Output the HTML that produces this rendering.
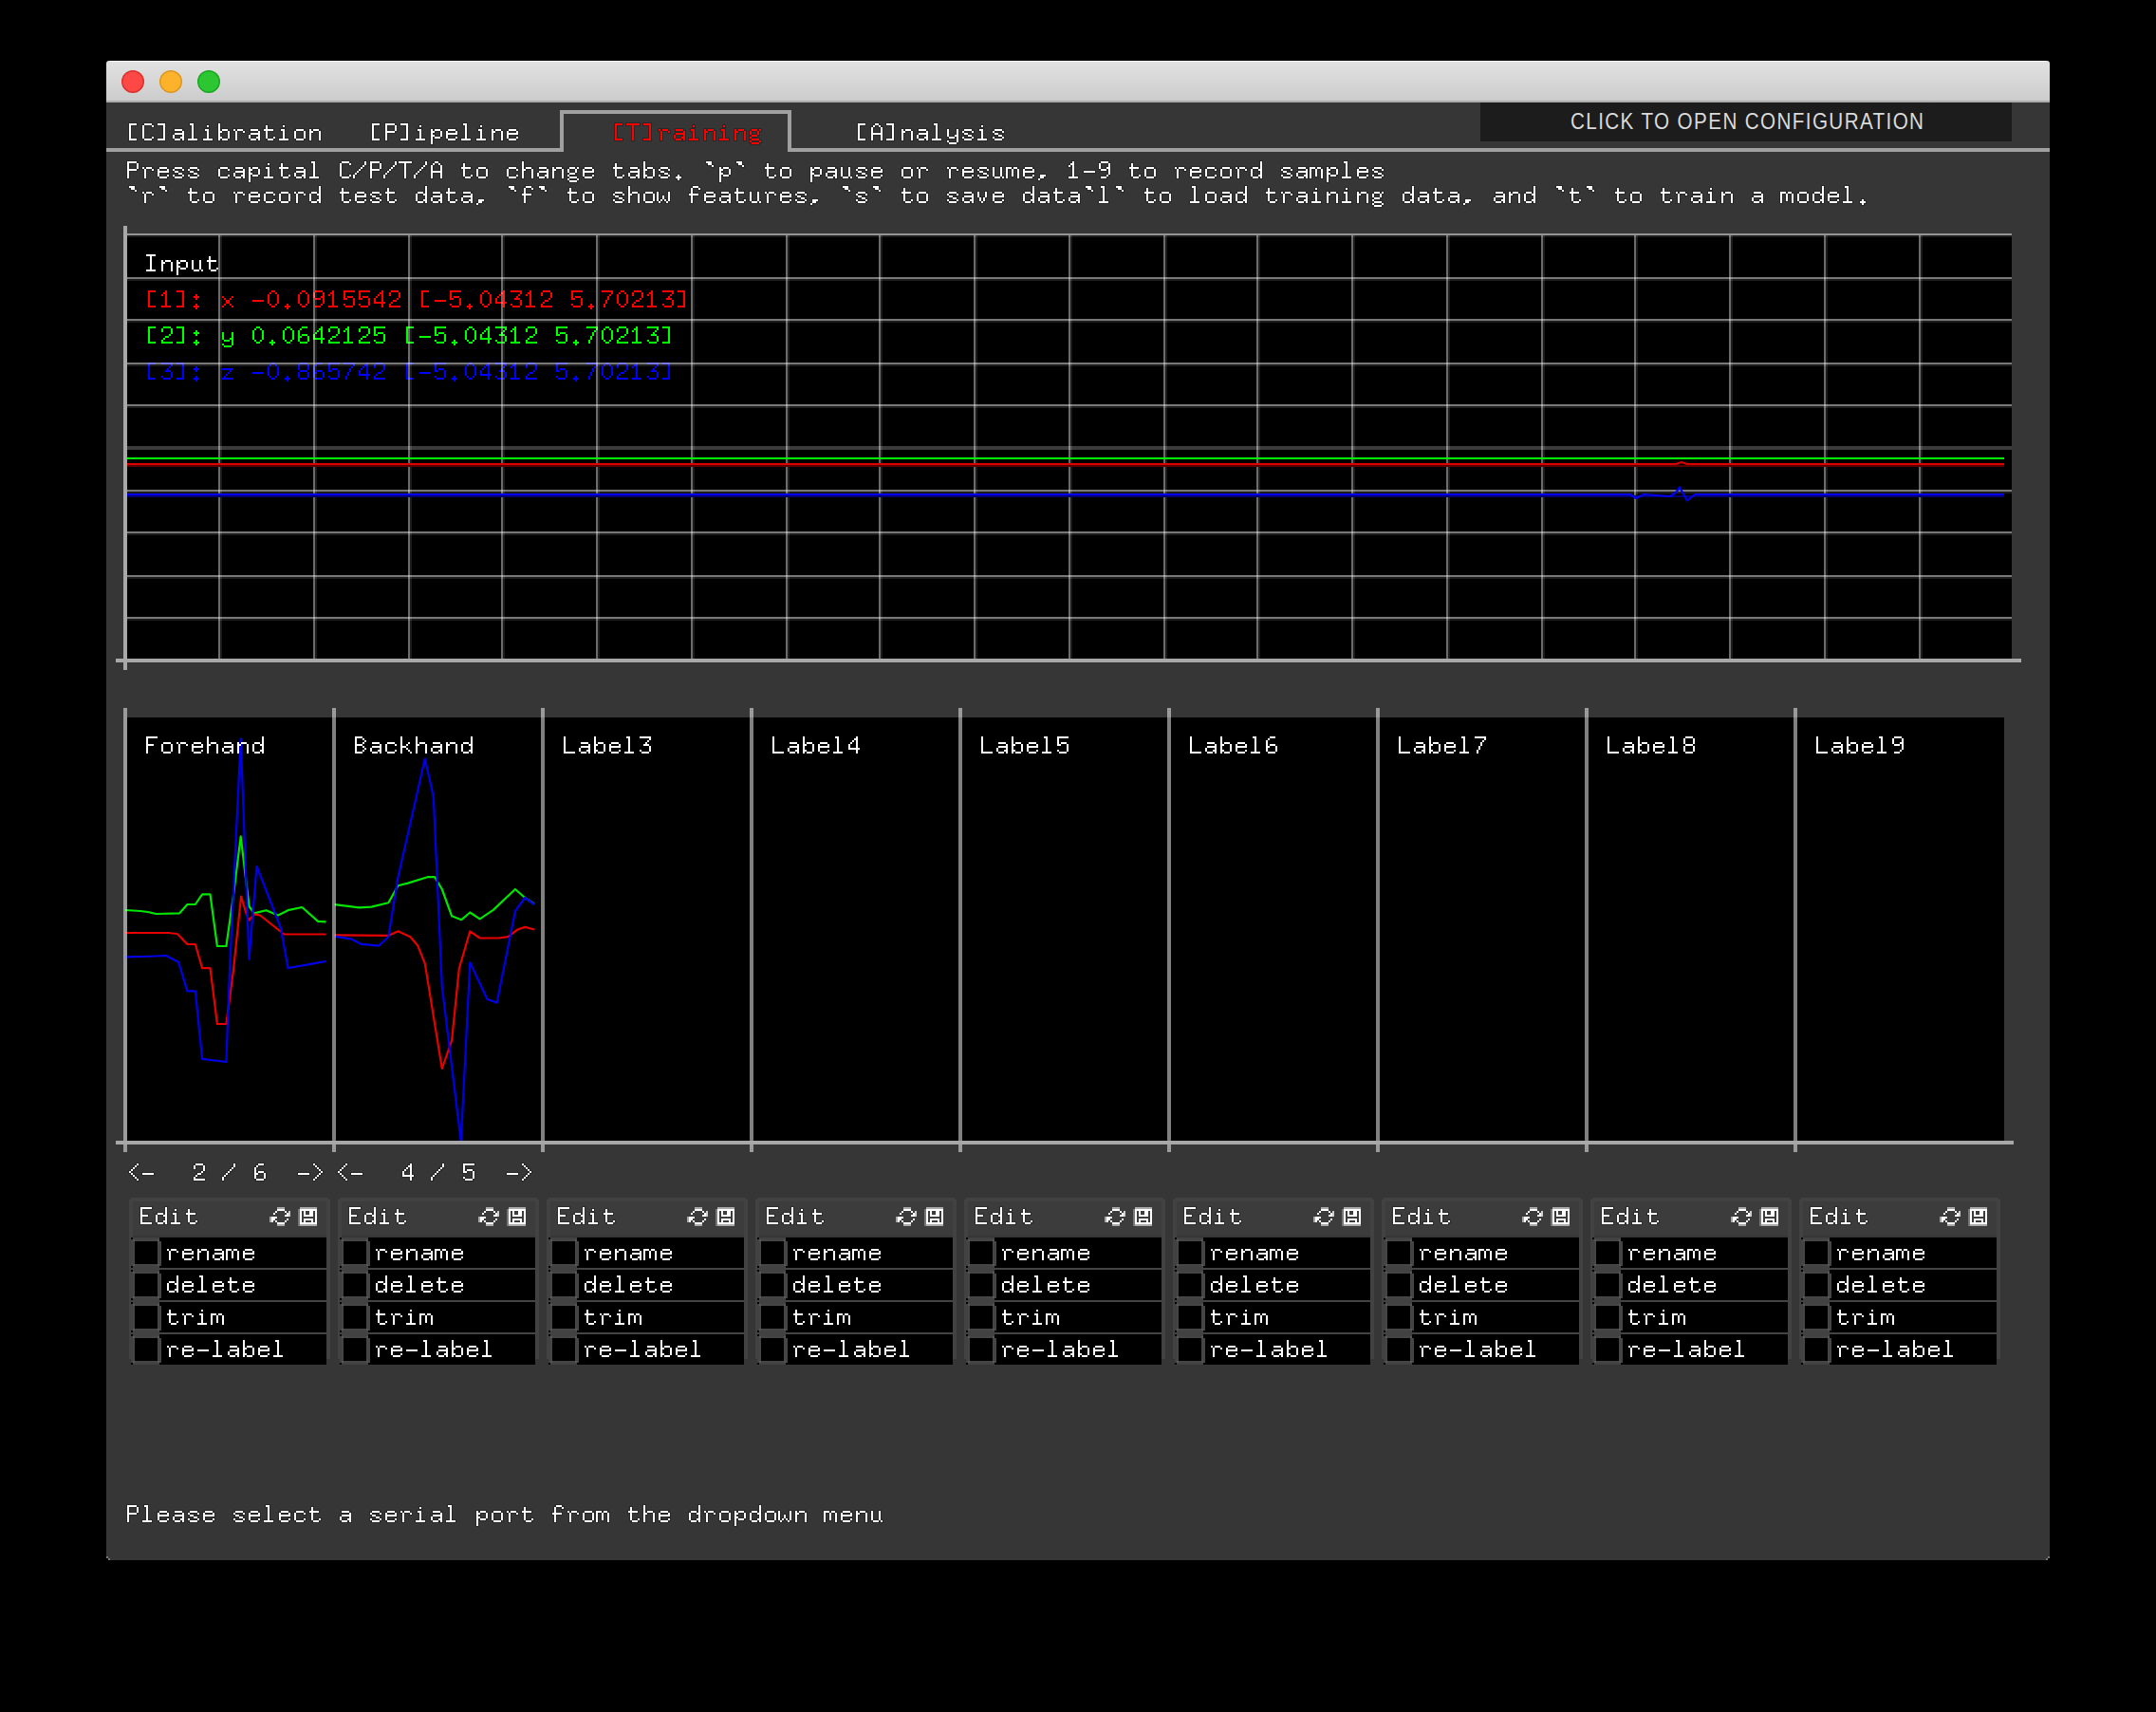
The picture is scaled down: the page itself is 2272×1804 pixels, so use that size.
<!DOCTYPE html><html><head><meta charset="utf-8"><style>html,body{margin:0;padding:0;background:#000;width:2272px;height:1804px;overflow:hidden}svg{display:block}</style></head><body>
<svg width="2272" height="1804" viewBox="0 0 2272 1804" shape-rendering="crispEdges">
<defs><linearGradient id="tb" x1="0" y1="0" x2="0" y2="1"><stop offset="0" stop-color="#e2e2e2"/><stop offset="1" stop-color="#cbcbcb"/></linearGradient>
<path id="g44" d="M4,18h6v2h-6zM4,20h4v2h-4zM2,22h2v2h-2z"/>
<path id="g45" d="M2,14h12v2h-12z"/>
<path id="g46" d="M6,18h2v2h-2zM4,20h6v2h-6zM6,22h2v2h-2z"/>
<path id="g47" d="M12,4h2v2h-2zM12,6h2v2h-2zM10,8h2v2h-2zM8,10h2v2h-2zM6,12h2v2h-2zM4,14h2v2h-2zM2,16h2v2h-2zM0,18h2v2h-2zM0,20h2v2h-2z"/>
<path id="g48" d="M6,4h4v2h-4zM4,6h2v2h-2zM10,6h2v2h-2zM2,8h2v2h-2zM12,8h2v2h-2zM2,10h2v2h-2zM12,10h2v2h-2zM2,12h2v2h-2zM12,12h2v2h-2zM2,14h2v2h-2zM12,14h2v2h-2zM2,16h2v2h-2zM12,16h2v2h-2zM4,18h2v2h-2zM10,18h2v2h-2zM6,20h4v2h-4z"/>
<path id="g49" d="M6,4h2v2h-2zM4,6h4v2h-4zM2,8h2v2h-2zM6,8h2v2h-2zM6,10h2v2h-2zM6,12h2v2h-2zM6,14h2v2h-2zM6,16h2v2h-2zM6,18h2v2h-2zM2,20h10v2h-10z"/>
<path id="g50" d="M4,4h8v2h-8zM2,6h2v2h-2zM12,6h2v2h-2zM2,8h2v2h-2zM12,8h2v2h-2zM12,10h2v2h-2zM10,12h2v2h-2zM6,14h4v2h-4zM4,16h2v2h-2zM2,18h2v2h-2zM2,20h12v2h-12z"/>
<path id="g51" d="M2,4h12v2h-12zM12,6h2v2h-2zM10,8h2v2h-2zM8,10h2v2h-2zM6,12h6v2h-6zM12,14h2v2h-2zM12,16h2v2h-2zM2,18h2v2h-2zM12,18h2v2h-2zM4,20h8v2h-8z"/>
<path id="g52" d="M10,4h2v2h-2zM8,6h4v2h-4zM6,8h2v2h-2zM10,8h2v2h-2zM4,10h2v2h-2zM10,10h2v2h-2zM2,12h2v2h-2zM10,12h2v2h-2zM2,14h2v2h-2zM10,14h2v2h-2zM2,16h12v2h-12zM10,18h2v2h-2zM10,20h2v2h-2z"/>
<path id="g53" d="M2,4h12v2h-12zM2,6h2v2h-2zM2,8h2v2h-2zM2,10h2v2h-2zM6,10h6v2h-6zM2,12h4v2h-4zM12,12h2v2h-2zM12,14h2v2h-2zM12,16h2v2h-2zM2,18h2v2h-2zM12,18h2v2h-2zM4,20h8v2h-8z"/>
<path id="g54" d="M6,4h6v2h-6zM4,6h2v2h-2zM2,8h2v2h-2zM2,10h2v2h-2zM2,12h2v2h-2zM6,12h6v2h-6zM2,14h4v2h-4zM12,14h2v2h-2zM2,16h2v2h-2zM12,16h2v2h-2zM2,18h2v2h-2zM12,18h2v2h-2zM4,20h8v2h-8z"/>
<path id="g55" d="M2,4h12v2h-12zM12,6h2v2h-2zM10,8h2v2h-2zM8,10h2v2h-2zM8,12h2v2h-2zM6,14h2v2h-2zM6,16h2v2h-2zM4,18h2v2h-2zM4,20h2v2h-2z"/>
<path id="g56" d="M4,4h8v2h-8zM2,6h2v2h-2zM12,6h2v2h-2zM2,8h2v2h-2zM12,8h2v2h-2zM2,10h2v2h-2zM12,10h2v2h-2zM4,12h8v2h-8zM2,14h2v2h-2zM12,14h2v2h-2zM2,16h2v2h-2zM12,16h2v2h-2zM2,18h2v2h-2zM12,18h2v2h-2zM4,20h8v2h-8z"/>
<path id="g57" d="M4,4h8v2h-8zM2,6h2v2h-2zM12,6h2v2h-2zM2,8h2v2h-2zM12,8h2v2h-2zM2,10h2v2h-2zM10,10h4v2h-4zM4,12h6v2h-6zM12,12h2v2h-2zM12,14h2v2h-2zM12,16h2v2h-2zM10,18h2v2h-2zM4,20h6v2h-6z"/>
<path id="g58" d="M6,8h2v2h-2zM4,10h6v2h-6zM6,12h2v2h-2zM6,18h2v2h-2zM4,20h6v2h-6zM6,22h2v2h-2z"/>
<path id="g60" d="M12,4h2v2h-2zM10,6h2v2h-2zM8,8h2v2h-2zM6,10h2v2h-2zM4,12h2v2h-2zM6,14h2v2h-2zM8,16h2v2h-2zM10,18h2v2h-2zM12,20h2v2h-2z"/>
<path id="g62" d="M2,4h2v2h-2zM4,6h2v2h-2zM6,8h2v2h-2zM8,10h2v2h-2zM10,12h2v2h-2zM8,14h2v2h-2zM6,16h2v2h-2zM4,18h2v2h-2zM2,20h2v2h-2z"/>
<path id="g65" d="M6,4h4v2h-4zM4,6h2v2h-2zM10,6h2v2h-2zM2,8h2v2h-2zM12,8h2v2h-2zM2,10h2v2h-2zM12,10h2v2h-2zM2,12h2v2h-2zM12,12h2v2h-2zM2,14h12v2h-12zM2,16h2v2h-2zM12,16h2v2h-2zM2,18h2v2h-2zM12,18h2v2h-2zM2,20h2v2h-2zM12,20h2v2h-2z"/>
<path id="g66" d="M2,4h8v2h-8zM2,6h2v2h-2zM10,6h2v2h-2zM2,8h2v2h-2zM12,8h2v2h-2zM2,10h2v2h-2zM10,10h2v2h-2zM2,12h8v2h-8zM2,14h2v2h-2zM10,14h2v2h-2zM2,16h2v2h-2zM12,16h2v2h-2zM2,18h2v2h-2zM10,18h2v2h-2zM2,20h8v2h-8z"/>
<path id="g67" d="M4,4h8v2h-8zM2,6h2v2h-2zM12,6h2v2h-2zM2,8h2v2h-2zM2,10h2v2h-2zM2,12h2v2h-2zM2,14h2v2h-2zM2,16h2v2h-2zM2,18h2v2h-2zM12,18h2v2h-2zM4,20h8v2h-8z"/>
<path id="g69" d="M2,4h12v2h-12zM2,6h2v2h-2zM2,8h2v2h-2zM2,10h2v2h-2zM2,12h8v2h-8zM2,14h2v2h-2zM2,16h2v2h-2zM2,18h2v2h-2zM2,20h12v2h-12z"/>
<path id="g70" d="M2,4h12v2h-12zM2,6h2v2h-2zM2,8h2v2h-2zM2,10h2v2h-2zM2,12h8v2h-8zM2,14h2v2h-2zM2,16h2v2h-2zM2,18h2v2h-2zM2,20h2v2h-2z"/>
<path id="g73" d="M2,4h10v2h-10zM6,6h2v2h-2zM6,8h2v2h-2zM6,10h2v2h-2zM6,12h2v2h-2zM6,14h2v2h-2zM6,16h2v2h-2zM6,18h2v2h-2zM2,20h10v2h-10z"/>
<path id="g76" d="M2,4h2v2h-2zM2,6h2v2h-2zM2,8h2v2h-2zM2,10h2v2h-2zM2,12h2v2h-2zM2,14h2v2h-2zM2,16h2v2h-2zM2,18h2v2h-2zM2,20h12v2h-12z"/>
<path id="g80" d="M2,4h10v2h-10zM2,6h2v2h-2zM12,6h2v2h-2zM2,8h2v2h-2zM12,8h2v2h-2zM2,10h2v2h-2zM12,10h2v2h-2zM2,12h10v2h-10zM2,14h2v2h-2zM2,16h2v2h-2zM2,18h2v2h-2zM2,20h2v2h-2z"/>
<path id="g84" d="M0,4h14v2h-14zM6,6h2v2h-2zM6,8h2v2h-2zM6,10h2v2h-2zM6,12h2v2h-2zM6,14h2v2h-2zM6,16h2v2h-2zM6,18h2v2h-2zM6,20h2v2h-2z"/>
<path id="g91" d="M4,4h8v2h-8zM4,6h2v2h-2zM4,8h2v2h-2zM4,10h2v2h-2zM4,12h2v2h-2zM4,14h2v2h-2zM4,16h2v2h-2zM4,18h2v2h-2zM4,20h8v2h-8z"/>
<path id="g93" d="M2,4h8v2h-8zM8,6h2v2h-2zM8,8h2v2h-2zM8,10h2v2h-2zM8,12h2v2h-2zM8,14h2v2h-2zM8,16h2v2h-2zM8,18h2v2h-2zM2,20h8v2h-8z"/>
<path id="g96" d="M4,4h6v2h-6zM6,6h4v2h-4zM10,8h2v2h-2z"/>
<path id="g97" d="M4,10h8v2h-8zM12,12h2v2h-2zM4,14h10v2h-10zM2,16h2v2h-2zM12,16h2v2h-2zM2,18h2v2h-2zM10,18h4v2h-4zM4,20h6v2h-6zM12,20h2v2h-2z"/>
<path id="g98" d="M2,4h2v2h-2zM2,6h2v2h-2zM2,8h2v2h-2zM2,10h2v2h-2zM6,10h6v2h-6zM2,12h4v2h-4zM12,12h2v2h-2zM2,14h2v2h-2zM12,14h2v2h-2zM2,16h2v2h-2zM12,16h2v2h-2zM2,18h4v2h-4zM12,18h2v2h-2zM2,20h2v2h-2zM6,20h6v2h-6z"/>
<path id="g99" d="M4,10h8v2h-8zM2,12h2v2h-2zM12,12h2v2h-2zM2,14h2v2h-2zM2,16h2v2h-2zM2,18h2v2h-2zM12,18h2v2h-2zM4,20h8v2h-8z"/>
<path id="g100" d="M12,4h2v2h-2zM12,6h2v2h-2zM12,8h2v2h-2zM4,10h6v2h-6zM12,10h2v2h-2zM2,12h2v2h-2zM10,12h4v2h-4zM2,14h2v2h-2zM12,14h2v2h-2zM2,16h2v2h-2zM12,16h2v2h-2zM2,18h2v2h-2zM10,18h4v2h-4zM4,20h6v2h-6zM12,20h2v2h-2z"/>
<path id="g101" d="M4,10h8v2h-8zM2,12h2v2h-2zM12,12h2v2h-2zM2,14h12v2h-12zM2,16h2v2h-2zM2,18h2v2h-2zM12,18h2v2h-2zM4,20h8v2h-8z"/>
<path id="g102" d="M6,4h6v2h-6zM4,6h2v2h-2zM12,6h2v2h-2zM4,8h2v2h-2zM4,10h2v2h-2zM2,12h10v2h-10zM4,14h2v2h-2zM4,16h2v2h-2zM4,18h2v2h-2zM4,20h2v2h-2z"/>
<path id="g103" d="M4,10h6v2h-6zM12,10h2v2h-2zM2,12h2v2h-2zM10,12h2v2h-2zM2,14h2v2h-2zM10,14h2v2h-2zM4,16h6v2h-6zM2,18h2v2h-2zM4,20h8v2h-8zM2,22h2v2h-2zM12,22h2v2h-2zM4,24h8v2h-8z"/>
<path id="g104" d="M2,4h2v2h-2zM2,6h2v2h-2zM2,8h2v2h-2zM2,10h2v2h-2zM6,10h6v2h-6zM2,12h4v2h-4zM12,12h2v2h-2zM2,14h2v2h-2zM12,14h2v2h-2zM2,16h2v2h-2zM12,16h2v2h-2zM2,18h2v2h-2zM12,18h2v2h-2zM2,20h2v2h-2zM12,20h2v2h-2z"/>
<path id="g105" d="M6,6h2v2h-2zM4,10h4v2h-4zM6,12h2v2h-2zM6,14h2v2h-2zM6,16h2v2h-2zM6,18h2v2h-2zM2,20h10v2h-10z"/>
<path id="g107" d="M2,4h2v2h-2zM2,6h2v2h-2zM2,8h2v2h-2zM2,10h2v2h-2zM10,10h2v2h-2zM2,12h2v2h-2zM8,12h2v2h-2zM2,14h6v2h-6zM2,16h2v2h-2zM8,16h2v2h-2zM2,18h2v2h-2zM10,18h2v2h-2zM2,20h2v2h-2zM12,20h2v2h-2z"/>
<path id="g108" d="M4,4h4v2h-4zM6,6h2v2h-2zM6,8h2v2h-2zM6,10h2v2h-2zM6,12h2v2h-2zM6,14h2v2h-2zM6,16h2v2h-2zM6,18h2v2h-2zM2,20h10v2h-10z"/>
<path id="g109" d="M0,10h6v2h-6zM8,10h4v2h-4zM0,12h2v2h-2zM6,12h2v2h-2zM12,12h2v2h-2zM0,14h2v2h-2zM6,14h2v2h-2zM12,14h2v2h-2zM0,16h2v2h-2zM6,16h2v2h-2zM12,16h2v2h-2zM0,18h2v2h-2zM6,18h2v2h-2zM12,18h2v2h-2zM0,20h2v2h-2zM12,20h2v2h-2z"/>
<path id="g110" d="M2,10h2v2h-2zM6,10h6v2h-6zM2,12h4v2h-4zM12,12h2v2h-2zM2,14h2v2h-2zM12,14h2v2h-2zM2,16h2v2h-2zM12,16h2v2h-2zM2,18h2v2h-2zM12,18h2v2h-2zM2,20h2v2h-2zM12,20h2v2h-2z"/>
<path id="g111" d="M4,10h8v2h-8zM2,12h2v2h-2zM12,12h2v2h-2zM2,14h2v2h-2zM12,14h2v2h-2zM2,16h2v2h-2zM12,16h2v2h-2zM2,18h2v2h-2zM12,18h2v2h-2zM4,20h8v2h-8z"/>
<path id="g112" d="M2,10h2v2h-2zM6,10h6v2h-6zM2,12h4v2h-4zM12,12h2v2h-2zM2,14h2v2h-2zM12,14h2v2h-2zM2,16h4v2h-4zM12,16h2v2h-2zM2,18h2v2h-2zM6,18h6v2h-6zM2,20h2v2h-2zM2,22h2v2h-2zM2,24h2v2h-2z"/>
<path id="g114" d="M2,10h2v2h-2zM6,10h6v2h-6zM4,12h2v2h-2zM12,12h2v2h-2zM4,14h2v2h-2zM4,16h2v2h-2zM4,18h2v2h-2zM4,20h2v2h-2z"/>
<path id="g115" d="M4,10h8v2h-8zM2,12h2v2h-2zM12,12h2v2h-2zM4,14h4v2h-4zM8,16h4v2h-4zM2,18h2v2h-2zM12,18h2v2h-2zM4,20h8v2h-8z"/>
<path id="g116" d="M4,6h2v2h-2zM4,8h2v2h-2zM2,10h10v2h-10zM4,12h2v2h-2zM4,14h2v2h-2zM4,16h2v2h-2zM4,18h2v2h-2zM12,18h2v2h-2zM6,20h6v2h-6z"/>
<path id="g117" d="M2,10h2v2h-2zM10,10h2v2h-2zM2,12h2v2h-2zM10,12h2v2h-2zM2,14h2v2h-2zM10,14h2v2h-2zM2,16h2v2h-2zM10,16h2v2h-2zM2,18h2v2h-2zM10,18h2v2h-2zM4,20h6v2h-6zM12,20h2v2h-2z"/>
<path id="g118" d="M2,10h2v2h-2zM10,10h2v2h-2zM2,12h2v2h-2zM10,12h2v2h-2zM2,14h2v2h-2zM10,14h2v2h-2zM4,16h2v2h-2zM8,16h2v2h-2zM4,18h2v2h-2zM8,18h2v2h-2zM6,20h2v2h-2z"/>
<path id="g119" d="M0,10h2v2h-2zM12,10h2v2h-2zM0,12h2v2h-2zM12,12h2v2h-2zM0,14h2v2h-2zM6,14h2v2h-2zM12,14h2v2h-2zM0,16h2v2h-2zM6,16h2v2h-2zM12,16h2v2h-2zM0,18h2v2h-2zM4,18h2v2h-2zM8,18h2v2h-2zM12,18h2v2h-2zM2,20h2v2h-2zM10,20h2v2h-2z"/>
<path id="g120" d="M2,10h2v2h-2zM12,10h2v2h-2zM4,12h2v2h-2zM10,12h2v2h-2zM6,14h4v2h-4zM6,16h4v2h-4zM4,18h2v2h-2zM10,18h2v2h-2zM2,20h2v2h-2zM12,20h2v2h-2z"/>
<path id="g121" d="M2,10h2v2h-2zM12,10h2v2h-2zM2,12h2v2h-2zM12,12h2v2h-2zM2,14h2v2h-2zM12,14h2v2h-2zM2,16h2v2h-2zM10,16h4v2h-4zM4,18h6v2h-6zM12,18h2v2h-2zM12,20h2v2h-2zM2,22h2v2h-2zM12,22h2v2h-2zM4,24h8v2h-8z"/>
<path id="g122" d="M2,10h12v2h-12zM10,12h2v2h-2zM8,14h2v2h-2zM6,16h2v2h-2zM4,18h2v2h-2zM2,20h12v2h-12z"/>
</defs>
<rect x="0" y="0" width="2272" height="1804" fill="#000"/>
<rect x="112" y="84" width="2048" height="1560" fill="#363636"/>
<path d="M112,108 V67 Q112,64 115,64 H2157 Q2160,64 2160,67 V108 Z" fill="url(#tb)" shape-rendering="auto"/>
<rect x="116" y="64" width="2040" height="1" fill="#f6f6f6"/>
<rect x="112" y="106" width="2048" height="2" fill="#acacac"/>
<circle cx="140" cy="86" r="11.3" fill="#fd4845" stroke="#dc2e2a" stroke-width="1.4" shape-rendering="auto"/>
<circle cx="180" cy="86" r="11.3" fill="#fdb22b" stroke="#dc961c" stroke-width="1.4" shape-rendering="auto"/>
<circle cx="220" cy="86" r="11.3" fill="#2cc632" stroke="#17a61e" stroke-width="1.4" shape-rendering="auto"/>
<rect x="112" y="1642" width="2" height="2" fill="#000"/><rect x="2158" y="1642" width="2" height="2" fill="#000"/>
<g fill="#777"><rect x="112" y="1640" width="2" height="2"/><rect x="114" y="1642" width="2" height="2"/><rect x="2158" y="1640" width="2" height="2"/><rect x="2156" y="1642" width="2" height="2"/></g>
<path d="M112,158 H592 V118 H832 V158 H2160" fill="none" stroke="#a0a0a0" stroke-width="4"/>
<rect x="1560" y="108" width="560" height="41" fill="#1c1c1c"/>
<text x="0" y="0" transform="translate(1655,136.4) scale(0.84,1)" fill="#dadada" style='font-family:"Liberation Sans",sans-serif;font-size:24.6px' textLength="442.9" lengthAdjust="spacing">CLICK TO OPEN CONFIGURATION</text>
<g fill="none" stroke="#000" stroke-opacity="0.25" stroke-width="2"><use href="#g91" x="132" y="126"/><use href="#g67" x="148" y="126"/><use href="#g93" x="164" y="126"/><use href="#g97" x="180" y="126"/><use href="#g108" x="196" y="126"/><use href="#g105" x="212" y="126"/><use href="#g98" x="228" y="126"/><use href="#g114" x="244" y="126"/><use href="#g97" x="260" y="126"/><use href="#g116" x="276" y="126"/><use href="#g105" x="292" y="126"/><use href="#g111" x="308" y="126"/><use href="#g110" x="324" y="126"/></g>
<g fill="#fff"><use href="#g91" x="132" y="126"/><use href="#g67" x="148" y="126"/><use href="#g93" x="164" y="126"/><use href="#g97" x="180" y="126"/><use href="#g108" x="196" y="126"/><use href="#g105" x="212" y="126"/><use href="#g98" x="228" y="126"/><use href="#g114" x="244" y="126"/><use href="#g97" x="260" y="126"/><use href="#g116" x="276" y="126"/><use href="#g105" x="292" y="126"/><use href="#g111" x="308" y="126"/><use href="#g110" x="324" y="126"/></g>
<g fill="none" stroke="#000" stroke-opacity="0.25" stroke-width="2"><use href="#g91" x="388" y="126"/><use href="#g80" x="404" y="126"/><use href="#g93" x="420" y="126"/><use href="#g105" x="436" y="126"/><use href="#g112" x="452" y="126"/><use href="#g101" x="468" y="126"/><use href="#g108" x="484" y="126"/><use href="#g105" x="500" y="126"/><use href="#g110" x="516" y="126"/><use href="#g101" x="532" y="126"/></g>
<g fill="#fff"><use href="#g91" x="388" y="126"/><use href="#g80" x="404" y="126"/><use href="#g93" x="420" y="126"/><use href="#g105" x="436" y="126"/><use href="#g112" x="452" y="126"/><use href="#g101" x="468" y="126"/><use href="#g108" x="484" y="126"/><use href="#g105" x="500" y="126"/><use href="#g110" x="516" y="126"/><use href="#g101" x="532" y="126"/></g>
<g fill="none" stroke="#000" stroke-opacity="0.25" stroke-width="2"><use href="#g91" x="644" y="126"/><use href="#g84" x="660" y="126"/><use href="#g93" x="676" y="126"/><use href="#g114" x="692" y="126"/><use href="#g97" x="708" y="126"/><use href="#g105" x="724" y="126"/><use href="#g110" x="740" y="126"/><use href="#g105" x="756" y="126"/><use href="#g110" x="772" y="126"/><use href="#g103" x="788" y="126"/></g>
<g fill="#ff0000"><use href="#g91" x="644" y="126"/><use href="#g84" x="660" y="126"/><use href="#g93" x="676" y="126"/><use href="#g114" x="692" y="126"/><use href="#g97" x="708" y="126"/><use href="#g105" x="724" y="126"/><use href="#g110" x="740" y="126"/><use href="#g105" x="756" y="126"/><use href="#g110" x="772" y="126"/><use href="#g103" x="788" y="126"/></g>
<g fill="none" stroke="#000" stroke-opacity="0.25" stroke-width="2"><use href="#g91" x="900" y="126"/><use href="#g65" x="916" y="126"/><use href="#g93" x="932" y="126"/><use href="#g110" x="948" y="126"/><use href="#g97" x="964" y="126"/><use href="#g108" x="980" y="126"/><use href="#g121" x="996" y="126"/><use href="#g115" x="1012" y="126"/><use href="#g105" x="1028" y="126"/><use href="#g115" x="1044" y="126"/></g>
<g fill="#fff"><use href="#g91" x="900" y="126"/><use href="#g65" x="916" y="126"/><use href="#g93" x="932" y="126"/><use href="#g110" x="948" y="126"/><use href="#g97" x="964" y="126"/><use href="#g108" x="980" y="126"/><use href="#g121" x="996" y="126"/><use href="#g115" x="1012" y="126"/><use href="#g105" x="1028" y="126"/><use href="#g115" x="1044" y="126"/></g>
<g fill="none" stroke="#000" stroke-opacity="0.25" stroke-width="2"><use href="#g80" x="132" y="166"/><use href="#g114" x="148" y="166"/><use href="#g101" x="164" y="166"/><use href="#g115" x="180" y="166"/><use href="#g115" x="196" y="166"/><use href="#g99" x="228" y="166"/><use href="#g97" x="244" y="166"/><use href="#g112" x="260" y="166"/><use href="#g105" x="276" y="166"/><use href="#g116" x="292" y="166"/><use href="#g97" x="308" y="166"/><use href="#g108" x="324" y="166"/><use href="#g67" x="356" y="166"/><use href="#g47" x="372" y="166"/><use href="#g80" x="388" y="166"/><use href="#g47" x="404" y="166"/><use href="#g84" x="420" y="166"/><use href="#g47" x="436" y="166"/><use href="#g65" x="452" y="166"/><use href="#g116" x="484" y="166"/><use href="#g111" x="500" y="166"/><use href="#g99" x="532" y="166"/><use href="#g104" x="548" y="166"/><use href="#g97" x="564" y="166"/><use href="#g110" x="580" y="166"/><use href="#g103" x="596" y="166"/><use href="#g101" x="612" y="166"/><use href="#g116" x="644" y="166"/><use href="#g97" x="660" y="166"/><use href="#g98" x="676" y="166"/><use href="#g115" x="692" y="166"/><use href="#g46" x="708" y="166"/><use href="#g96" x="740" y="166"/><use href="#g112" x="756" y="166"/><use href="#g96" x="772" y="166"/><use href="#g116" x="804" y="166"/><use href="#g111" x="820" y="166"/><use href="#g112" x="852" y="166"/><use href="#g97" x="868" y="166"/><use href="#g117" x="884" y="166"/><use href="#g115" x="900" y="166"/><use href="#g101" x="916" y="166"/><use href="#g111" x="948" y="166"/><use href="#g114" x="964" y="166"/><use href="#g114" x="996" y="166"/><use href="#g101" x="1012" y="166"/><use href="#g115" x="1028" y="166"/><use href="#g117" x="1044" y="166"/><use href="#g109" x="1060" y="166"/><use href="#g101" x="1076" y="166"/><use href="#g44" x="1092" y="166"/><use href="#g49" x="1124" y="166"/><use href="#g45" x="1140" y="166"/><use href="#g57" x="1156" y="166"/><use href="#g116" x="1188" y="166"/><use href="#g111" x="1204" y="166"/><use href="#g114" x="1236" y="166"/><use href="#g101" x="1252" y="166"/><use href="#g99" x="1268" y="166"/><use href="#g111" x="1284" y="166"/><use href="#g114" x="1300" y="166"/><use href="#g100" x="1316" y="166"/><use href="#g115" x="1348" y="166"/><use href="#g97" x="1364" y="166"/><use href="#g109" x="1380" y="166"/><use href="#g112" x="1396" y="166"/><use href="#g108" x="1412" y="166"/><use href="#g101" x="1428" y="166"/><use href="#g115" x="1444" y="166"/></g>
<g fill="#fff"><use href="#g80" x="132" y="166"/><use href="#g114" x="148" y="166"/><use href="#g101" x="164" y="166"/><use href="#g115" x="180" y="166"/><use href="#g115" x="196" y="166"/><use href="#g99" x="228" y="166"/><use href="#g97" x="244" y="166"/><use href="#g112" x="260" y="166"/><use href="#g105" x="276" y="166"/><use href="#g116" x="292" y="166"/><use href="#g97" x="308" y="166"/><use href="#g108" x="324" y="166"/><use href="#g67" x="356" y="166"/><use href="#g47" x="372" y="166"/><use href="#g80" x="388" y="166"/><use href="#g47" x="404" y="166"/><use href="#g84" x="420" y="166"/><use href="#g47" x="436" y="166"/><use href="#g65" x="452" y="166"/><use href="#g116" x="484" y="166"/><use href="#g111" x="500" y="166"/><use href="#g99" x="532" y="166"/><use href="#g104" x="548" y="166"/><use href="#g97" x="564" y="166"/><use href="#g110" x="580" y="166"/><use href="#g103" x="596" y="166"/><use href="#g101" x="612" y="166"/><use href="#g116" x="644" y="166"/><use href="#g97" x="660" y="166"/><use href="#g98" x="676" y="166"/><use href="#g115" x="692" y="166"/><use href="#g46" x="708" y="166"/><use href="#g96" x="740" y="166"/><use href="#g112" x="756" y="166"/><use href="#g96" x="772" y="166"/><use href="#g116" x="804" y="166"/><use href="#g111" x="820" y="166"/><use href="#g112" x="852" y="166"/><use href="#g97" x="868" y="166"/><use href="#g117" x="884" y="166"/><use href="#g115" x="900" y="166"/><use href="#g101" x="916" y="166"/><use href="#g111" x="948" y="166"/><use href="#g114" x="964" y="166"/><use href="#g114" x="996" y="166"/><use href="#g101" x="1012" y="166"/><use href="#g115" x="1028" y="166"/><use href="#g117" x="1044" y="166"/><use href="#g109" x="1060" y="166"/><use href="#g101" x="1076" y="166"/><use href="#g44" x="1092" y="166"/><use href="#g49" x="1124" y="166"/><use href="#g45" x="1140" y="166"/><use href="#g57" x="1156" y="166"/><use href="#g116" x="1188" y="166"/><use href="#g111" x="1204" y="166"/><use href="#g114" x="1236" y="166"/><use href="#g101" x="1252" y="166"/><use href="#g99" x="1268" y="166"/><use href="#g111" x="1284" y="166"/><use href="#g114" x="1300" y="166"/><use href="#g100" x="1316" y="166"/><use href="#g115" x="1348" y="166"/><use href="#g97" x="1364" y="166"/><use href="#g109" x="1380" y="166"/><use href="#g112" x="1396" y="166"/><use href="#g108" x="1412" y="166"/><use href="#g101" x="1428" y="166"/><use href="#g115" x="1444" y="166"/></g>
<g fill="none" stroke="#000" stroke-opacity="0.25" stroke-width="2"><use href="#g96" x="132" y="192"/><use href="#g114" x="148" y="192"/><use href="#g96" x="164" y="192"/><use href="#g116" x="196" y="192"/><use href="#g111" x="212" y="192"/><use href="#g114" x="244" y="192"/><use href="#g101" x="260" y="192"/><use href="#g99" x="276" y="192"/><use href="#g111" x="292" y="192"/><use href="#g114" x="308" y="192"/><use href="#g100" x="324" y="192"/><use href="#g116" x="356" y="192"/><use href="#g101" x="372" y="192"/><use href="#g115" x="388" y="192"/><use href="#g116" x="404" y="192"/><use href="#g100" x="436" y="192"/><use href="#g97" x="452" y="192"/><use href="#g116" x="468" y="192"/><use href="#g97" x="484" y="192"/><use href="#g44" x="500" y="192"/><use href="#g96" x="532" y="192"/><use href="#g102" x="548" y="192"/><use href="#g96" x="564" y="192"/><use href="#g116" x="596" y="192"/><use href="#g111" x="612" y="192"/><use href="#g115" x="644" y="192"/><use href="#g104" x="660" y="192"/><use href="#g111" x="676" y="192"/><use href="#g119" x="692" y="192"/><use href="#g102" x="724" y="192"/><use href="#g101" x="740" y="192"/><use href="#g97" x="756" y="192"/><use href="#g116" x="772" y="192"/><use href="#g117" x="788" y="192"/><use href="#g114" x="804" y="192"/><use href="#g101" x="820" y="192"/><use href="#g115" x="836" y="192"/><use href="#g44" x="852" y="192"/><use href="#g96" x="884" y="192"/><use href="#g115" x="900" y="192"/><use href="#g96" x="916" y="192"/><use href="#g116" x="948" y="192"/><use href="#g111" x="964" y="192"/><use href="#g115" x="996" y="192"/><use href="#g97" x="1012" y="192"/><use href="#g118" x="1028" y="192"/><use href="#g101" x="1044" y="192"/><use href="#g100" x="1076" y="192"/><use href="#g97" x="1092" y="192"/><use href="#g116" x="1108" y="192"/><use href="#g97" x="1124" y="192"/><use href="#g96" x="1140" y="192"/><use href="#g108" x="1156" y="192"/><use href="#g96" x="1172" y="192"/><use href="#g116" x="1204" y="192"/><use href="#g111" x="1220" y="192"/><use href="#g108" x="1252" y="192"/><use href="#g111" x="1268" y="192"/><use href="#g97" x="1284" y="192"/><use href="#g100" x="1300" y="192"/><use href="#g116" x="1332" y="192"/><use href="#g114" x="1348" y="192"/><use href="#g97" x="1364" y="192"/><use href="#g105" x="1380" y="192"/><use href="#g110" x="1396" y="192"/><use href="#g105" x="1412" y="192"/><use href="#g110" x="1428" y="192"/><use href="#g103" x="1444" y="192"/><use href="#g100" x="1476" y="192"/><use href="#g97" x="1492" y="192"/><use href="#g116" x="1508" y="192"/><use href="#g97" x="1524" y="192"/><use href="#g44" x="1540" y="192"/><use href="#g97" x="1572" y="192"/><use href="#g110" x="1588" y="192"/><use href="#g100" x="1604" y="192"/><use href="#g96" x="1636" y="192"/><use href="#g116" x="1652" y="192"/><use href="#g96" x="1668" y="192"/><use href="#g116" x="1700" y="192"/><use href="#g111" x="1716" y="192"/><use href="#g116" x="1748" y="192"/><use href="#g114" x="1764" y="192"/><use href="#g97" x="1780" y="192"/><use href="#g105" x="1796" y="192"/><use href="#g110" x="1812" y="192"/><use href="#g97" x="1844" y="192"/><use href="#g109" x="1876" y="192"/><use href="#g111" x="1892" y="192"/><use href="#g100" x="1908" y="192"/><use href="#g101" x="1924" y="192"/><use href="#g108" x="1940" y="192"/><use href="#g46" x="1956" y="192"/></g>
<g fill="#fff"><use href="#g96" x="132" y="192"/><use href="#g114" x="148" y="192"/><use href="#g96" x="164" y="192"/><use href="#g116" x="196" y="192"/><use href="#g111" x="212" y="192"/><use href="#g114" x="244" y="192"/><use href="#g101" x="260" y="192"/><use href="#g99" x="276" y="192"/><use href="#g111" x="292" y="192"/><use href="#g114" x="308" y="192"/><use href="#g100" x="324" y="192"/><use href="#g116" x="356" y="192"/><use href="#g101" x="372" y="192"/><use href="#g115" x="388" y="192"/><use href="#g116" x="404" y="192"/><use href="#g100" x="436" y="192"/><use href="#g97" x="452" y="192"/><use href="#g116" x="468" y="192"/><use href="#g97" x="484" y="192"/><use href="#g44" x="500" y="192"/><use href="#g96" x="532" y="192"/><use href="#g102" x="548" y="192"/><use href="#g96" x="564" y="192"/><use href="#g116" x="596" y="192"/><use href="#g111" x="612" y="192"/><use href="#g115" x="644" y="192"/><use href="#g104" x="660" y="192"/><use href="#g111" x="676" y="192"/><use href="#g119" x="692" y="192"/><use href="#g102" x="724" y="192"/><use href="#g101" x="740" y="192"/><use href="#g97" x="756" y="192"/><use href="#g116" x="772" y="192"/><use href="#g117" x="788" y="192"/><use href="#g114" x="804" y="192"/><use href="#g101" x="820" y="192"/><use href="#g115" x="836" y="192"/><use href="#g44" x="852" y="192"/><use href="#g96" x="884" y="192"/><use href="#g115" x="900" y="192"/><use href="#g96" x="916" y="192"/><use href="#g116" x="948" y="192"/><use href="#g111" x="964" y="192"/><use href="#g115" x="996" y="192"/><use href="#g97" x="1012" y="192"/><use href="#g118" x="1028" y="192"/><use href="#g101" x="1044" y="192"/><use href="#g100" x="1076" y="192"/><use href="#g97" x="1092" y="192"/><use href="#g116" x="1108" y="192"/><use href="#g97" x="1124" y="192"/><use href="#g96" x="1140" y="192"/><use href="#g108" x="1156" y="192"/><use href="#g96" x="1172" y="192"/><use href="#g116" x="1204" y="192"/><use href="#g111" x="1220" y="192"/><use href="#g108" x="1252" y="192"/><use href="#g111" x="1268" y="192"/><use href="#g97" x="1284" y="192"/><use href="#g100" x="1300" y="192"/><use href="#g116" x="1332" y="192"/><use href="#g114" x="1348" y="192"/><use href="#g97" x="1364" y="192"/><use href="#g105" x="1380" y="192"/><use href="#g110" x="1396" y="192"/><use href="#g105" x="1412" y="192"/><use href="#g110" x="1428" y="192"/><use href="#g103" x="1444" y="192"/><use href="#g100" x="1476" y="192"/><use href="#g97" x="1492" y="192"/><use href="#g116" x="1508" y="192"/><use href="#g97" x="1524" y="192"/><use href="#g44" x="1540" y="192"/><use href="#g97" x="1572" y="192"/><use href="#g110" x="1588" y="192"/><use href="#g100" x="1604" y="192"/><use href="#g96" x="1636" y="192"/><use href="#g116" x="1652" y="192"/><use href="#g96" x="1668" y="192"/><use href="#g116" x="1700" y="192"/><use href="#g111" x="1716" y="192"/><use href="#g116" x="1748" y="192"/><use href="#g114" x="1764" y="192"/><use href="#g97" x="1780" y="192"/><use href="#g105" x="1796" y="192"/><use href="#g110" x="1812" y="192"/><use href="#g97" x="1844" y="192"/><use href="#g109" x="1876" y="192"/><use href="#g111" x="1892" y="192"/><use href="#g100" x="1908" y="192"/><use href="#g101" x="1924" y="192"/><use href="#g108" x="1940" y="192"/><use href="#g46" x="1956" y="192"/></g>
<rect x="134" y="248" width="1986" height="446" fill="#000"/>
<g fill="#fff"><use href="#g73" x="152" y="264"/><use href="#g110" x="168" y="264"/><use href="#g112" x="184" y="264"/><use href="#g117" x="200" y="264"/><use href="#g116" x="216" y="264"/></g>
<g fill="#ff0000"><use href="#g91" x="152" y="302"/><use href="#g49" x="168" y="302"/><use href="#g93" x="184" y="302"/><use href="#g58" x="200" y="302"/><use href="#g120" x="232" y="302"/><use href="#g45" x="264" y="302"/><use href="#g48" x="280" y="302"/><use href="#g46" x="296" y="302"/><use href="#g48" x="312" y="302"/><use href="#g57" x="328" y="302"/><use href="#g49" x="344" y="302"/><use href="#g53" x="360" y="302"/><use href="#g53" x="376" y="302"/><use href="#g52" x="392" y="302"/><use href="#g50" x="408" y="302"/><use href="#g91" x="440" y="302"/><use href="#g45" x="456" y="302"/><use href="#g53" x="472" y="302"/><use href="#g46" x="488" y="302"/><use href="#g48" x="504" y="302"/><use href="#g52" x="520" y="302"/><use href="#g51" x="536" y="302"/><use href="#g49" x="552" y="302"/><use href="#g50" x="568" y="302"/><use href="#g53" x="600" y="302"/><use href="#g46" x="616" y="302"/><use href="#g55" x="632" y="302"/><use href="#g48" x="648" y="302"/><use href="#g50" x="664" y="302"/><use href="#g49" x="680" y="302"/><use href="#g51" x="696" y="302"/><use href="#g93" x="712" y="302"/></g>
<g fill="#00ff00"><use href="#g91" x="152" y="340"/><use href="#g50" x="168" y="340"/><use href="#g93" x="184" y="340"/><use href="#g58" x="200" y="340"/><use href="#g121" x="232" y="340"/><use href="#g48" x="264" y="340"/><use href="#g46" x="280" y="340"/><use href="#g48" x="296" y="340"/><use href="#g54" x="312" y="340"/><use href="#g52" x="328" y="340"/><use href="#g50" x="344" y="340"/><use href="#g49" x="360" y="340"/><use href="#g50" x="376" y="340"/><use href="#g53" x="392" y="340"/><use href="#g91" x="424" y="340"/><use href="#g45" x="440" y="340"/><use href="#g53" x="456" y="340"/><use href="#g46" x="472" y="340"/><use href="#g48" x="488" y="340"/><use href="#g52" x="504" y="340"/><use href="#g51" x="520" y="340"/><use href="#g49" x="536" y="340"/><use href="#g50" x="552" y="340"/><use href="#g53" x="584" y="340"/><use href="#g46" x="600" y="340"/><use href="#g55" x="616" y="340"/><use href="#g48" x="632" y="340"/><use href="#g50" x="648" y="340"/><use href="#g49" x="664" y="340"/><use href="#g51" x="680" y="340"/><use href="#g93" x="696" y="340"/></g>
<g fill="#0000ff"><use href="#g91" x="152" y="378"/><use href="#g51" x="168" y="378"/><use href="#g93" x="184" y="378"/><use href="#g58" x="200" y="378"/><use href="#g122" x="232" y="378"/><use href="#g45" x="264" y="378"/><use href="#g48" x="280" y="378"/><use href="#g46" x="296" y="378"/><use href="#g56" x="312" y="378"/><use href="#g54" x="328" y="378"/><use href="#g53" x="344" y="378"/><use href="#g55" x="360" y="378"/><use href="#g52" x="376" y="378"/><use href="#g50" x="392" y="378"/><use href="#g91" x="424" y="378"/><use href="#g45" x="440" y="378"/><use href="#g53" x="456" y="378"/><use href="#g46" x="472" y="378"/><use href="#g48" x="488" y="378"/><use href="#g52" x="504" y="378"/><use href="#g51" x="520" y="378"/><use href="#g49" x="536" y="378"/><use href="#g50" x="552" y="378"/><use href="#g53" x="584" y="378"/><use href="#g46" x="600" y="378"/><use href="#g55" x="616" y="378"/><use href="#g48" x="632" y="378"/><use href="#g50" x="648" y="378"/><use href="#g49" x="664" y="378"/><use href="#g51" x="680" y="378"/><use href="#g93" x="696" y="378"/></g>
<g fill="#fff" fill-opacity="0.11">
<rect x="232" y="248" width="2" height="446"/>
<rect x="332" y="248" width="2" height="446"/>
<rect x="432" y="248" width="2" height="446"/>
<rect x="530" y="248" width="2" height="446"/>
<rect x="630" y="248" width="2" height="446"/>
<rect x="730" y="248" width="2" height="446"/>
<rect x="830" y="248" width="2" height="446"/>
<rect x="928" y="248" width="2" height="446"/>
<rect x="1028" y="248" width="2" height="446"/>
<rect x="1128" y="248" width="2" height="446"/>
<rect x="1228" y="248" width="2" height="446"/>
<rect x="1326" y="248" width="2" height="446"/>
<rect x="1426" y="248" width="2" height="446"/>
<rect x="1526" y="248" width="2" height="446"/>
<rect x="1626" y="248" width="2" height="446"/>
<rect x="1724" y="248" width="2" height="446"/>
<rect x="1824" y="248" width="2" height="446"/>
<rect x="1924" y="248" width="2" height="446"/>
<rect x="2024" y="248" width="2" height="446"/>
<rect x="134" y="248" width="1986" height="2"/>
<rect x="134" y="294" width="1986" height="2"/>
<rect x="134" y="338" width="1986" height="2"/>
<rect x="134" y="384" width="1986" height="2"/>
<rect x="134" y="428" width="1986" height="2"/>
<rect x="134" y="518" width="1986" height="2"/>
<rect x="134" y="562" width="1986" height="2"/>
<rect x="134" y="608" width="1986" height="2"/>
<rect x="134" y="652" width="1986" height="2"/>
</g>
<rect x="134" y="470" width="1986" height="4" fill="#fff" fill-opacity="0.23"/>
<g fill="#fff" fill-opacity="0.42">
<rect x="230" y="248" width="2" height="446"/>
<rect x="330" y="248" width="2" height="446"/>
<rect x="430" y="248" width="2" height="446"/>
<rect x="528" y="248" width="2" height="446"/>
<rect x="628" y="248" width="2" height="446"/>
<rect x="728" y="248" width="2" height="446"/>
<rect x="828" y="248" width="2" height="446"/>
<rect x="926" y="248" width="2" height="446"/>
<rect x="1026" y="248" width="2" height="446"/>
<rect x="1126" y="248" width="2" height="446"/>
<rect x="1226" y="248" width="2" height="446"/>
<rect x="1324" y="248" width="2" height="446"/>
<rect x="1424" y="248" width="2" height="446"/>
<rect x="1524" y="248" width="2" height="446"/>
<rect x="1624" y="248" width="2" height="446"/>
<rect x="1722" y="248" width="2" height="446"/>
<rect x="1822" y="248" width="2" height="446"/>
<rect x="1922" y="248" width="2" height="446"/>
<rect x="2022" y="248" width="2" height="446"/>
</g><g fill="#fff" fill-opacity="0.47">
<rect x="134" y="246" width="1986" height="2"/>
<rect x="134" y="292" width="1986" height="2"/>
<rect x="134" y="336" width="1986" height="2"/>
<rect x="134" y="382" width="1986" height="2"/>
<rect x="134" y="426" width="1986" height="2"/>
<rect x="134" y="516" width="1986" height="2"/>
<rect x="134" y="560" width="1986" height="2"/>
<rect x="134" y="606" width="1986" height="2"/>
<rect x="134" y="650" width="1986" height="2"/>
</g>
<rect x="130" y="238" width="4" height="468" fill="#a8a8a8"/>
<rect x="122" y="694" width="2008" height="4" fill="#a8a8a8"/>
<g shape-rendering="auto" fill="none" stroke-width="2.5" stroke-linejoin="round">
<polyline stroke="#00ff00" stroke-width="2" points="134,483 2112,483"/>
<polyline stroke="#5a0000" stroke-width="2" points="134,491 2112,491"/>
<polyline stroke="#dd0000" stroke-width="2" points="134,489 1766,489 1772,487 1778,489 2112,489"/>
<polyline stroke="#000070" stroke-width="2" points="134,523 2112,523"/>
<polyline stroke="#0000ee" stroke-width="2.2" points="134,521 1718,521 1724,525 1732,521 1760,523 1766,519 1770,513.5 1778,527.5 1786,521 2112,521"/>
</g>
<rect x="134" y="756" width="1978" height="446" fill="#000"/>
<g shape-rendering="auto" fill="none" stroke-width="2.2" stroke-linejoin="round">
<polyline stroke="#00e600" points="132,959 140,959.5 148,960 156,961 164.4,963 189,962.4 197.4,953 205.8,953 213.1,942.4 221.5,942.4 228.9,997 238.4,997 245.9,944 253.7,881.4 262.5,955 267.8,962.4 280.4,959.2 293,964.5 303.5,959.2 318.3,956 335.1,970.8 343.5,971.4"/>
<polyline stroke="#e60000" points="132,983 177.6,983 186.8,984 197.4,995 205.8,995 213.1,1020.2 221.5,1020.2 228.9,1079 238.4,1079 245.9,1023 254.1,944.5 259.4,962.4 262.5,969.7 267.8,963.4 274.1,964.5 299.3,984.5 343.5,984.5"/>
<polyline stroke="#0000e6" points="132,1008.4 150,1008 175,1007 188.1,1013.7 197.4,1044.4 205.8,1044.4 213.1,1115.9 238.4,1119 242,1023 253.7,778.4 262.5,1010.7 270.5,913 282.7,944 295.9,978 303.5,1020.2 343.5,1012.9"/>
<polyline stroke="#00e600" points="352.7,953.2 378.4,956.3 391.3,955.6 409.3,951.2 419.5,933.2 429.8,930.6 450.4,924.2 458.1,924.2 465.8,937 476.1,965.3 486.3,969.2 495.3,961.5 505.6,968.4 519.8,958.9 542.9,937 553.2,946 563,952.5"/>
<polyline stroke="#e60000" points="352.7,985.4 409.3,985.9 419.5,981.3 432.4,987.2 440.1,996.2 447.8,1015.4 465.8,1126 476.1,1096.4 483.8,1020.6 495.3,981.3 505.6,988.5 524.9,988.5 535.2,987.2 545.5,979.5 553.2,976.9 563,979.5"/>
<polyline stroke="#0000e6" points="352.7,986.7 370.7,989.7 381,994.9 399,996.7 409.3,987.2 419.5,924.2 447.8,799.6 456.8,839.4 465.8,1039.9 485.8,1203 495.3,1014.2 513.3,1052.7 523.6,1056.6 542.9,960.2 553.2,946 563,953"/>
</g>
<rect x="130" y="746" width="4" height="468" fill="#fff" fill-opacity="0.5"/>
<rect x="350" y="746" width="4" height="468" fill="#fff" fill-opacity="0.5"/>
<rect x="570" y="746" width="4" height="468" fill="#fff" fill-opacity="0.5"/>
<rect x="790" y="746" width="4" height="468" fill="#fff" fill-opacity="0.5"/>
<rect x="1010" y="746" width="4" height="468" fill="#fff" fill-opacity="0.5"/>
<rect x="1230" y="746" width="4" height="468" fill="#fff" fill-opacity="0.5"/>
<rect x="1450" y="746" width="4" height="468" fill="#fff" fill-opacity="0.5"/>
<rect x="1670" y="746" width="4" height="468" fill="#fff" fill-opacity="0.5"/>
<rect x="1890" y="746" width="4" height="468" fill="#fff" fill-opacity="0.5"/>
<rect x="122" y="1202" width="2000" height="4" fill="#a8a8a8"/>
<g fill="#fff"><use href="#g70" x="152" y="772"/><use href="#g111" x="168" y="772"/><use href="#g114" x="184" y="772"/><use href="#g101" x="200" y="772"/><use href="#g104" x="216" y="772"/><use href="#g97" x="232" y="772"/><use href="#g110" x="248" y="772"/><use href="#g100" x="264" y="772"/></g>
<g fill="#fff"><use href="#g66" x="372" y="772"/><use href="#g97" x="388" y="772"/><use href="#g99" x="404" y="772"/><use href="#g107" x="420" y="772"/><use href="#g104" x="436" y="772"/><use href="#g97" x="452" y="772"/><use href="#g110" x="468" y="772"/><use href="#g100" x="484" y="772"/></g>
<g fill="#fff"><use href="#g76" x="592" y="772"/><use href="#g97" x="608" y="772"/><use href="#g98" x="624" y="772"/><use href="#g101" x="640" y="772"/><use href="#g108" x="656" y="772"/><use href="#g51" x="672" y="772"/></g>
<g fill="#fff"><use href="#g76" x="812" y="772"/><use href="#g97" x="828" y="772"/><use href="#g98" x="844" y="772"/><use href="#g101" x="860" y="772"/><use href="#g108" x="876" y="772"/><use href="#g52" x="892" y="772"/></g>
<g fill="#fff"><use href="#g76" x="1032" y="772"/><use href="#g97" x="1048" y="772"/><use href="#g98" x="1064" y="772"/><use href="#g101" x="1080" y="772"/><use href="#g108" x="1096" y="772"/><use href="#g53" x="1112" y="772"/></g>
<g fill="#fff"><use href="#g76" x="1252" y="772"/><use href="#g97" x="1268" y="772"/><use href="#g98" x="1284" y="772"/><use href="#g101" x="1300" y="772"/><use href="#g108" x="1316" y="772"/><use href="#g54" x="1332" y="772"/></g>
<g fill="#fff"><use href="#g76" x="1472" y="772"/><use href="#g97" x="1488" y="772"/><use href="#g98" x="1504" y="772"/><use href="#g101" x="1520" y="772"/><use href="#g108" x="1536" y="772"/><use href="#g55" x="1552" y="772"/></g>
<g fill="#fff"><use href="#g76" x="1692" y="772"/><use href="#g97" x="1708" y="772"/><use href="#g98" x="1724" y="772"/><use href="#g101" x="1740" y="772"/><use href="#g108" x="1756" y="772"/><use href="#g56" x="1772" y="772"/></g>
<g fill="#fff"><use href="#g76" x="1912" y="772"/><use href="#g97" x="1928" y="772"/><use href="#g98" x="1944" y="772"/><use href="#g101" x="1960" y="772"/><use href="#g108" x="1976" y="772"/><use href="#g57" x="1992" y="772"/></g>
<g fill="none" stroke="#000" stroke-opacity="0.25" stroke-width="2"><use href="#g60" x="132" y="1222"/><use href="#g45" x="148" y="1222"/></g>
<g fill="#fff"><use href="#g60" x="132" y="1222"/><use href="#g45" x="148" y="1222"/></g>
<g fill="none" stroke="#000" stroke-opacity="0.25" stroke-width="2"><use href="#g50" x="202" y="1222"/><use href="#g47" x="234" y="1222"/><use href="#g54" x="266" y="1222"/></g>
<g fill="#fff"><use href="#g50" x="202" y="1222"/><use href="#g47" x="234" y="1222"/><use href="#g54" x="266" y="1222"/></g>
<g fill="none" stroke="#000" stroke-opacity="0.25" stroke-width="2"><use href="#g45" x="312" y="1222"/><use href="#g62" x="328" y="1222"/></g>
<g fill="#fff"><use href="#g45" x="312" y="1222"/><use href="#g62" x="328" y="1222"/></g>
<g fill="none" stroke="#000" stroke-opacity="0.25" stroke-width="2"><use href="#g60" x="352" y="1222"/><use href="#g45" x="368" y="1222"/></g>
<g fill="#fff"><use href="#g60" x="352" y="1222"/><use href="#g45" x="368" y="1222"/></g>
<g fill="none" stroke="#000" stroke-opacity="0.25" stroke-width="2"><use href="#g52" x="422" y="1222"/><use href="#g47" x="454" y="1222"/><use href="#g53" x="486" y="1222"/></g>
<g fill="#fff"><use href="#g52" x="422" y="1222"/><use href="#g47" x="454" y="1222"/><use href="#g53" x="486" y="1222"/></g>
<g fill="none" stroke="#000" stroke-opacity="0.25" stroke-width="2"><use href="#g45" x="532" y="1222"/><use href="#g62" x="548" y="1222"/></g>
<g fill="#fff"><use href="#g45" x="532" y="1222"/><use href="#g62" x="548" y="1222"/></g>
<rect x="136" y="1264" width="212" height="168" fill="#424242"/>
<rect x="138" y="1262" width="208" height="2" fill="#424242"/>
<rect x="140" y="1266" width="204" height="36" fill="#3c3c3c"/>
<rect x="140" y="1302" width="204" height="2" fill="#363636"/>
<g fill="none" stroke="#000" stroke-opacity="0.25" stroke-width="2"><use href="#g69" x="146" y="1268"/><use href="#g100" x="162" y="1268"/><use href="#g105" x="178" y="1268"/><use href="#g116" x="194" y="1268"/></g>
<g fill="#fff"><use href="#g69" x="146" y="1268"/><use href="#g100" x="162" y="1268"/><use href="#g105" x="178" y="1268"/><use href="#g116" x="194" y="1268"/></g>
<rect x="292" y="1272" width="2" height="2" fill="#a8a8a8"/>
<rect x="294" y="1272" width="2" height="2" fill="#a8a8a8"/>
<rect x="296" y="1272" width="2" height="2" fill="#a8a8a8"/>
<rect x="298" y="1272" width="2" height="2" fill="#a8a8a8"/>
<rect x="292" y="1274" width="2" height="2" fill="#fff"/>
<rect x="294" y="1274" width="2" height="2" fill="#fff"/>
<rect x="296" y="1274" width="2" height="2" fill="#fff"/>
<rect x="298" y="1274" width="2" height="2" fill="#fff"/>
<rect x="290" y="1276" width="2" height="2" fill="#fff"/>
<rect x="300" y="1276" width="2" height="2" fill="#fff"/>
<rect x="304" y="1276" width="2" height="2" fill="#cfcfcf"/>
<rect x="288" y="1278" width="2" height="2" fill="#fff"/>
<rect x="302" y="1278" width="2" height="2" fill="#fff"/>
<rect x="304" y="1278" width="2" height="2" fill="#cfcfcf"/>
<rect x="300" y="1280" width="2" height="2" fill="#fff"/>
<rect x="302" y="1280" width="2" height="2" fill="#fff"/>
<rect x="304" y="1280" width="2" height="2" fill="#cfcfcf"/>
<rect x="284" y="1282" width="2" height="2" fill="#a8a8a8"/>
<rect x="286" y="1282" width="2" height="2" fill="#fff"/>
<rect x="288" y="1282" width="2" height="2" fill="#fff"/>
<rect x="290" y="1282" width="2" height="2" fill="#fff"/>
<rect x="284" y="1284" width="2" height="2" fill="#a8a8a8"/>
<rect x="286" y="1284" width="2" height="2" fill="#fff"/>
<rect x="288" y="1284" width="2" height="2" fill="#fff"/>
<rect x="302" y="1284" width="2" height="2" fill="#fff"/>
<rect x="284" y="1286" width="2" height="2" fill="#a8a8a8"/>
<rect x="286" y="1286" width="2" height="2" fill="#fff"/>
<rect x="290" y="1286" width="2" height="2" fill="#fff"/>
<rect x="300" y="1286" width="2" height="2" fill="#fff"/>
<rect x="292" y="1288" width="2" height="2" fill="#fff"/>
<rect x="294" y="1288" width="2" height="2" fill="#fff"/>
<rect x="296" y="1288" width="2" height="2" fill="#fff"/>
<rect x="298" y="1288" width="2" height="2" fill="#fff"/>
<rect x="292" y="1290" width="2" height="2" fill="#a8a8a8"/>
<rect x="294" y="1290" width="2" height="2" fill="#a8a8a8"/>
<rect x="296" y="1290" width="2" height="2" fill="#a8a8a8"/>
<rect x="298" y="1290" width="2" height="2" fill="#a8a8a8"/>
<rect x="314" y="1274" width="2" height="18" fill="#777"/>
<rect x="316" y="1272" width="18" height="2" fill="#aaa"/>
<rect x="316" y="1290" width="18" height="2" fill="#aaa"/>
<rect x="316" y="1274" width="18" height="16" fill="#fff"/>
<rect x="318" y="1276" width="2" height="12" fill="#3c3c3c"/>
<rect x="330" y="1276" width="2" height="12" fill="#3c3c3c"/>
<rect x="322" y="1276" width="4" height="4" fill="#3c3c3c"/>
<rect x="318" y="1282" width="14" height="2" fill="#3c3c3c"/>
<rect x="322" y="1286" width="6" height="2" fill="#3c3c3c"/>
<rect x="138" y="1304" width="32" height="134" fill="#424242"/>
<rect x="140" y="1306" width="30" height="28" fill="#454545"/>
<rect x="142" y="1308" width="24" height="24" fill="#000"/>
<rect x="168" y="1304" width="176" height="32" fill="#000"/>
<rect x="166" y="1308" width="4" height="26" fill="#454545"/>
<rect x="170" y="1336" width="174" height="2" fill="#444"/>
<rect x="138" y="1304" width="2" height="2" fill="#000"/><rect x="138" y="1334" width="2" height="2" fill="#000"/>
<g fill="#555"><rect x="140" y="1306" width="2" height="2"/><rect x="140" y="1332" width="2" height="2"/><rect x="166" y="1306" width="2" height="2"/><rect x="166" y="1332" width="2" height="2"/></g>
<g fill="#fff"><use href="#g114" x="174" y="1306"/><use href="#g101" x="190" y="1306"/><use href="#g110" x="206" y="1306"/><use href="#g97" x="222" y="1306"/><use href="#g109" x="238" y="1306"/><use href="#g101" x="254" y="1306"/></g>
<rect x="140" y="1340" width="30" height="28" fill="#454545"/>
<rect x="142" y="1342" width="24" height="24" fill="#000"/>
<rect x="168" y="1338" width="176" height="32" fill="#000"/>
<rect x="166" y="1342" width="4" height="26" fill="#454545"/>
<rect x="170" y="1370" width="174" height="2" fill="#444"/>
<rect x="138" y="1338" width="2" height="2" fill="#000"/><rect x="138" y="1368" width="2" height="2" fill="#000"/>
<g fill="#555"><rect x="140" y="1340" width="2" height="2"/><rect x="140" y="1366" width="2" height="2"/><rect x="166" y="1340" width="2" height="2"/><rect x="166" y="1366" width="2" height="2"/></g>
<g fill="#fff"><use href="#g100" x="174" y="1340"/><use href="#g101" x="190" y="1340"/><use href="#g108" x="206" y="1340"/><use href="#g101" x="222" y="1340"/><use href="#g116" x="238" y="1340"/><use href="#g101" x="254" y="1340"/></g>
<rect x="140" y="1374" width="30" height="28" fill="#454545"/>
<rect x="142" y="1376" width="24" height="24" fill="#000"/>
<rect x="168" y="1372" width="176" height="32" fill="#000"/>
<rect x="166" y="1376" width="4" height="26" fill="#454545"/>
<rect x="170" y="1404" width="174" height="2" fill="#444"/>
<rect x="138" y="1372" width="2" height="2" fill="#000"/><rect x="138" y="1402" width="2" height="2" fill="#000"/>
<g fill="#555"><rect x="140" y="1374" width="2" height="2"/><rect x="140" y="1400" width="2" height="2"/><rect x="166" y="1374" width="2" height="2"/><rect x="166" y="1400" width="2" height="2"/></g>
<g fill="#fff"><use href="#g116" x="174" y="1374"/><use href="#g114" x="190" y="1374"/><use href="#g105" x="206" y="1374"/><use href="#g109" x="222" y="1374"/></g>
<rect x="140" y="1408" width="30" height="28" fill="#454545"/>
<rect x="142" y="1410" width="24" height="24" fill="#000"/>
<rect x="168" y="1406" width="176" height="32" fill="#000"/>
<rect x="166" y="1410" width="4" height="26" fill="#454545"/>
<rect x="138" y="1406" width="2" height="2" fill="#000"/><rect x="138" y="1436" width="2" height="2" fill="#000"/>
<g fill="#555"><rect x="140" y="1408" width="2" height="2"/><rect x="140" y="1434" width="2" height="2"/><rect x="166" y="1408" width="2" height="2"/><rect x="166" y="1434" width="2" height="2"/></g>
<g fill="#fff"><use href="#g114" x="174" y="1408"/><use href="#g101" x="190" y="1408"/><use href="#g45" x="206" y="1408"/><use href="#g108" x="222" y="1408"/><use href="#g97" x="238" y="1408"/><use href="#g98" x="254" y="1408"/><use href="#g101" x="270" y="1408"/><use href="#g108" x="286" y="1408"/></g>
<rect x="356" y="1264" width="212" height="168" fill="#424242"/>
<rect x="358" y="1262" width="208" height="2" fill="#424242"/>
<rect x="360" y="1266" width="204" height="36" fill="#3c3c3c"/>
<rect x="360" y="1302" width="204" height="2" fill="#363636"/>
<g fill="none" stroke="#000" stroke-opacity="0.25" stroke-width="2"><use href="#g69" x="366" y="1268"/><use href="#g100" x="382" y="1268"/><use href="#g105" x="398" y="1268"/><use href="#g116" x="414" y="1268"/></g>
<g fill="#fff"><use href="#g69" x="366" y="1268"/><use href="#g100" x="382" y="1268"/><use href="#g105" x="398" y="1268"/><use href="#g116" x="414" y="1268"/></g>
<rect x="512" y="1272" width="2" height="2" fill="#a8a8a8"/>
<rect x="514" y="1272" width="2" height="2" fill="#a8a8a8"/>
<rect x="516" y="1272" width="2" height="2" fill="#a8a8a8"/>
<rect x="518" y="1272" width="2" height="2" fill="#a8a8a8"/>
<rect x="512" y="1274" width="2" height="2" fill="#fff"/>
<rect x="514" y="1274" width="2" height="2" fill="#fff"/>
<rect x="516" y="1274" width="2" height="2" fill="#fff"/>
<rect x="518" y="1274" width="2" height="2" fill="#fff"/>
<rect x="510" y="1276" width="2" height="2" fill="#fff"/>
<rect x="520" y="1276" width="2" height="2" fill="#fff"/>
<rect x="524" y="1276" width="2" height="2" fill="#cfcfcf"/>
<rect x="508" y="1278" width="2" height="2" fill="#fff"/>
<rect x="522" y="1278" width="2" height="2" fill="#fff"/>
<rect x="524" y="1278" width="2" height="2" fill="#cfcfcf"/>
<rect x="520" y="1280" width="2" height="2" fill="#fff"/>
<rect x="522" y="1280" width="2" height="2" fill="#fff"/>
<rect x="524" y="1280" width="2" height="2" fill="#cfcfcf"/>
<rect x="504" y="1282" width="2" height="2" fill="#a8a8a8"/>
<rect x="506" y="1282" width="2" height="2" fill="#fff"/>
<rect x="508" y="1282" width="2" height="2" fill="#fff"/>
<rect x="510" y="1282" width="2" height="2" fill="#fff"/>
<rect x="504" y="1284" width="2" height="2" fill="#a8a8a8"/>
<rect x="506" y="1284" width="2" height="2" fill="#fff"/>
<rect x="508" y="1284" width="2" height="2" fill="#fff"/>
<rect x="522" y="1284" width="2" height="2" fill="#fff"/>
<rect x="504" y="1286" width="2" height="2" fill="#a8a8a8"/>
<rect x="506" y="1286" width="2" height="2" fill="#fff"/>
<rect x="510" y="1286" width="2" height="2" fill="#fff"/>
<rect x="520" y="1286" width="2" height="2" fill="#fff"/>
<rect x="512" y="1288" width="2" height="2" fill="#fff"/>
<rect x="514" y="1288" width="2" height="2" fill="#fff"/>
<rect x="516" y="1288" width="2" height="2" fill="#fff"/>
<rect x="518" y="1288" width="2" height="2" fill="#fff"/>
<rect x="512" y="1290" width="2" height="2" fill="#a8a8a8"/>
<rect x="514" y="1290" width="2" height="2" fill="#a8a8a8"/>
<rect x="516" y="1290" width="2" height="2" fill="#a8a8a8"/>
<rect x="518" y="1290" width="2" height="2" fill="#a8a8a8"/>
<rect x="534" y="1274" width="2" height="18" fill="#777"/>
<rect x="536" y="1272" width="18" height="2" fill="#aaa"/>
<rect x="536" y="1290" width="18" height="2" fill="#aaa"/>
<rect x="536" y="1274" width="18" height="16" fill="#fff"/>
<rect x="538" y="1276" width="2" height="12" fill="#3c3c3c"/>
<rect x="550" y="1276" width="2" height="12" fill="#3c3c3c"/>
<rect x="542" y="1276" width="4" height="4" fill="#3c3c3c"/>
<rect x="538" y="1282" width="14" height="2" fill="#3c3c3c"/>
<rect x="542" y="1286" width="6" height="2" fill="#3c3c3c"/>
<rect x="358" y="1304" width="32" height="134" fill="#424242"/>
<rect x="360" y="1306" width="30" height="28" fill="#454545"/>
<rect x="362" y="1308" width="24" height="24" fill="#000"/>
<rect x="388" y="1304" width="176" height="32" fill="#000"/>
<rect x="386" y="1308" width="4" height="26" fill="#454545"/>
<rect x="390" y="1336" width="174" height="2" fill="#444"/>
<rect x="358" y="1304" width="2" height="2" fill="#000"/><rect x="358" y="1334" width="2" height="2" fill="#000"/>
<g fill="#555"><rect x="360" y="1306" width="2" height="2"/><rect x="360" y="1332" width="2" height="2"/><rect x="386" y="1306" width="2" height="2"/><rect x="386" y="1332" width="2" height="2"/></g>
<g fill="#fff"><use href="#g114" x="394" y="1306"/><use href="#g101" x="410" y="1306"/><use href="#g110" x="426" y="1306"/><use href="#g97" x="442" y="1306"/><use href="#g109" x="458" y="1306"/><use href="#g101" x="474" y="1306"/></g>
<rect x="360" y="1340" width="30" height="28" fill="#454545"/>
<rect x="362" y="1342" width="24" height="24" fill="#000"/>
<rect x="388" y="1338" width="176" height="32" fill="#000"/>
<rect x="386" y="1342" width="4" height="26" fill="#454545"/>
<rect x="390" y="1370" width="174" height="2" fill="#444"/>
<rect x="358" y="1338" width="2" height="2" fill="#000"/><rect x="358" y="1368" width="2" height="2" fill="#000"/>
<g fill="#555"><rect x="360" y="1340" width="2" height="2"/><rect x="360" y="1366" width="2" height="2"/><rect x="386" y="1340" width="2" height="2"/><rect x="386" y="1366" width="2" height="2"/></g>
<g fill="#fff"><use href="#g100" x="394" y="1340"/><use href="#g101" x="410" y="1340"/><use href="#g108" x="426" y="1340"/><use href="#g101" x="442" y="1340"/><use href="#g116" x="458" y="1340"/><use href="#g101" x="474" y="1340"/></g>
<rect x="360" y="1374" width="30" height="28" fill="#454545"/>
<rect x="362" y="1376" width="24" height="24" fill="#000"/>
<rect x="388" y="1372" width="176" height="32" fill="#000"/>
<rect x="386" y="1376" width="4" height="26" fill="#454545"/>
<rect x="390" y="1404" width="174" height="2" fill="#444"/>
<rect x="358" y="1372" width="2" height="2" fill="#000"/><rect x="358" y="1402" width="2" height="2" fill="#000"/>
<g fill="#555"><rect x="360" y="1374" width="2" height="2"/><rect x="360" y="1400" width="2" height="2"/><rect x="386" y="1374" width="2" height="2"/><rect x="386" y="1400" width="2" height="2"/></g>
<g fill="#fff"><use href="#g116" x="394" y="1374"/><use href="#g114" x="410" y="1374"/><use href="#g105" x="426" y="1374"/><use href="#g109" x="442" y="1374"/></g>
<rect x="360" y="1408" width="30" height="28" fill="#454545"/>
<rect x="362" y="1410" width="24" height="24" fill="#000"/>
<rect x="388" y="1406" width="176" height="32" fill="#000"/>
<rect x="386" y="1410" width="4" height="26" fill="#454545"/>
<rect x="358" y="1406" width="2" height="2" fill="#000"/><rect x="358" y="1436" width="2" height="2" fill="#000"/>
<g fill="#555"><rect x="360" y="1408" width="2" height="2"/><rect x="360" y="1434" width="2" height="2"/><rect x="386" y="1408" width="2" height="2"/><rect x="386" y="1434" width="2" height="2"/></g>
<g fill="#fff"><use href="#g114" x="394" y="1408"/><use href="#g101" x="410" y="1408"/><use href="#g45" x="426" y="1408"/><use href="#g108" x="442" y="1408"/><use href="#g97" x="458" y="1408"/><use href="#g98" x="474" y="1408"/><use href="#g101" x="490" y="1408"/><use href="#g108" x="506" y="1408"/></g>
<rect x="576" y="1264" width="212" height="168" fill="#424242"/>
<rect x="578" y="1262" width="208" height="2" fill="#424242"/>
<rect x="580" y="1266" width="204" height="36" fill="#3c3c3c"/>
<rect x="580" y="1302" width="204" height="2" fill="#363636"/>
<g fill="none" stroke="#000" stroke-opacity="0.25" stroke-width="2"><use href="#g69" x="586" y="1268"/><use href="#g100" x="602" y="1268"/><use href="#g105" x="618" y="1268"/><use href="#g116" x="634" y="1268"/></g>
<g fill="#fff"><use href="#g69" x="586" y="1268"/><use href="#g100" x="602" y="1268"/><use href="#g105" x="618" y="1268"/><use href="#g116" x="634" y="1268"/></g>
<rect x="732" y="1272" width="2" height="2" fill="#a8a8a8"/>
<rect x="734" y="1272" width="2" height="2" fill="#a8a8a8"/>
<rect x="736" y="1272" width="2" height="2" fill="#a8a8a8"/>
<rect x="738" y="1272" width="2" height="2" fill="#a8a8a8"/>
<rect x="732" y="1274" width="2" height="2" fill="#fff"/>
<rect x="734" y="1274" width="2" height="2" fill="#fff"/>
<rect x="736" y="1274" width="2" height="2" fill="#fff"/>
<rect x="738" y="1274" width="2" height="2" fill="#fff"/>
<rect x="730" y="1276" width="2" height="2" fill="#fff"/>
<rect x="740" y="1276" width="2" height="2" fill="#fff"/>
<rect x="744" y="1276" width="2" height="2" fill="#cfcfcf"/>
<rect x="728" y="1278" width="2" height="2" fill="#fff"/>
<rect x="742" y="1278" width="2" height="2" fill="#fff"/>
<rect x="744" y="1278" width="2" height="2" fill="#cfcfcf"/>
<rect x="740" y="1280" width="2" height="2" fill="#fff"/>
<rect x="742" y="1280" width="2" height="2" fill="#fff"/>
<rect x="744" y="1280" width="2" height="2" fill="#cfcfcf"/>
<rect x="724" y="1282" width="2" height="2" fill="#a8a8a8"/>
<rect x="726" y="1282" width="2" height="2" fill="#fff"/>
<rect x="728" y="1282" width="2" height="2" fill="#fff"/>
<rect x="730" y="1282" width="2" height="2" fill="#fff"/>
<rect x="724" y="1284" width="2" height="2" fill="#a8a8a8"/>
<rect x="726" y="1284" width="2" height="2" fill="#fff"/>
<rect x="728" y="1284" width="2" height="2" fill="#fff"/>
<rect x="742" y="1284" width="2" height="2" fill="#fff"/>
<rect x="724" y="1286" width="2" height="2" fill="#a8a8a8"/>
<rect x="726" y="1286" width="2" height="2" fill="#fff"/>
<rect x="730" y="1286" width="2" height="2" fill="#fff"/>
<rect x="740" y="1286" width="2" height="2" fill="#fff"/>
<rect x="732" y="1288" width="2" height="2" fill="#fff"/>
<rect x="734" y="1288" width="2" height="2" fill="#fff"/>
<rect x="736" y="1288" width="2" height="2" fill="#fff"/>
<rect x="738" y="1288" width="2" height="2" fill="#fff"/>
<rect x="732" y="1290" width="2" height="2" fill="#a8a8a8"/>
<rect x="734" y="1290" width="2" height="2" fill="#a8a8a8"/>
<rect x="736" y="1290" width="2" height="2" fill="#a8a8a8"/>
<rect x="738" y="1290" width="2" height="2" fill="#a8a8a8"/>
<rect x="754" y="1274" width="2" height="18" fill="#777"/>
<rect x="756" y="1272" width="18" height="2" fill="#aaa"/>
<rect x="756" y="1290" width="18" height="2" fill="#aaa"/>
<rect x="756" y="1274" width="18" height="16" fill="#fff"/>
<rect x="758" y="1276" width="2" height="12" fill="#3c3c3c"/>
<rect x="770" y="1276" width="2" height="12" fill="#3c3c3c"/>
<rect x="762" y="1276" width="4" height="4" fill="#3c3c3c"/>
<rect x="758" y="1282" width="14" height="2" fill="#3c3c3c"/>
<rect x="762" y="1286" width="6" height="2" fill="#3c3c3c"/>
<rect x="578" y="1304" width="32" height="134" fill="#424242"/>
<rect x="580" y="1306" width="30" height="28" fill="#454545"/>
<rect x="582" y="1308" width="24" height="24" fill="#000"/>
<rect x="608" y="1304" width="176" height="32" fill="#000"/>
<rect x="606" y="1308" width="4" height="26" fill="#454545"/>
<rect x="610" y="1336" width="174" height="2" fill="#444"/>
<rect x="578" y="1304" width="2" height="2" fill="#000"/><rect x="578" y="1334" width="2" height="2" fill="#000"/>
<g fill="#555"><rect x="580" y="1306" width="2" height="2"/><rect x="580" y="1332" width="2" height="2"/><rect x="606" y="1306" width="2" height="2"/><rect x="606" y="1332" width="2" height="2"/></g>
<g fill="#fff"><use href="#g114" x="614" y="1306"/><use href="#g101" x="630" y="1306"/><use href="#g110" x="646" y="1306"/><use href="#g97" x="662" y="1306"/><use href="#g109" x="678" y="1306"/><use href="#g101" x="694" y="1306"/></g>
<rect x="580" y="1340" width="30" height="28" fill="#454545"/>
<rect x="582" y="1342" width="24" height="24" fill="#000"/>
<rect x="608" y="1338" width="176" height="32" fill="#000"/>
<rect x="606" y="1342" width="4" height="26" fill="#454545"/>
<rect x="610" y="1370" width="174" height="2" fill="#444"/>
<rect x="578" y="1338" width="2" height="2" fill="#000"/><rect x="578" y="1368" width="2" height="2" fill="#000"/>
<g fill="#555"><rect x="580" y="1340" width="2" height="2"/><rect x="580" y="1366" width="2" height="2"/><rect x="606" y="1340" width="2" height="2"/><rect x="606" y="1366" width="2" height="2"/></g>
<g fill="#fff"><use href="#g100" x="614" y="1340"/><use href="#g101" x="630" y="1340"/><use href="#g108" x="646" y="1340"/><use href="#g101" x="662" y="1340"/><use href="#g116" x="678" y="1340"/><use href="#g101" x="694" y="1340"/></g>
<rect x="580" y="1374" width="30" height="28" fill="#454545"/>
<rect x="582" y="1376" width="24" height="24" fill="#000"/>
<rect x="608" y="1372" width="176" height="32" fill="#000"/>
<rect x="606" y="1376" width="4" height="26" fill="#454545"/>
<rect x="610" y="1404" width="174" height="2" fill="#444"/>
<rect x="578" y="1372" width="2" height="2" fill="#000"/><rect x="578" y="1402" width="2" height="2" fill="#000"/>
<g fill="#555"><rect x="580" y="1374" width="2" height="2"/><rect x="580" y="1400" width="2" height="2"/><rect x="606" y="1374" width="2" height="2"/><rect x="606" y="1400" width="2" height="2"/></g>
<g fill="#fff"><use href="#g116" x="614" y="1374"/><use href="#g114" x="630" y="1374"/><use href="#g105" x="646" y="1374"/><use href="#g109" x="662" y="1374"/></g>
<rect x="580" y="1408" width="30" height="28" fill="#454545"/>
<rect x="582" y="1410" width="24" height="24" fill="#000"/>
<rect x="608" y="1406" width="176" height="32" fill="#000"/>
<rect x="606" y="1410" width="4" height="26" fill="#454545"/>
<rect x="578" y="1406" width="2" height="2" fill="#000"/><rect x="578" y="1436" width="2" height="2" fill="#000"/>
<g fill="#555"><rect x="580" y="1408" width="2" height="2"/><rect x="580" y="1434" width="2" height="2"/><rect x="606" y="1408" width="2" height="2"/><rect x="606" y="1434" width="2" height="2"/></g>
<g fill="#fff"><use href="#g114" x="614" y="1408"/><use href="#g101" x="630" y="1408"/><use href="#g45" x="646" y="1408"/><use href="#g108" x="662" y="1408"/><use href="#g97" x="678" y="1408"/><use href="#g98" x="694" y="1408"/><use href="#g101" x="710" y="1408"/><use href="#g108" x="726" y="1408"/></g>
<rect x="796" y="1264" width="212" height="168" fill="#424242"/>
<rect x="798" y="1262" width="208" height="2" fill="#424242"/>
<rect x="800" y="1266" width="204" height="36" fill="#3c3c3c"/>
<rect x="800" y="1302" width="204" height="2" fill="#363636"/>
<g fill="none" stroke="#000" stroke-opacity="0.25" stroke-width="2"><use href="#g69" x="806" y="1268"/><use href="#g100" x="822" y="1268"/><use href="#g105" x="838" y="1268"/><use href="#g116" x="854" y="1268"/></g>
<g fill="#fff"><use href="#g69" x="806" y="1268"/><use href="#g100" x="822" y="1268"/><use href="#g105" x="838" y="1268"/><use href="#g116" x="854" y="1268"/></g>
<rect x="952" y="1272" width="2" height="2" fill="#a8a8a8"/>
<rect x="954" y="1272" width="2" height="2" fill="#a8a8a8"/>
<rect x="956" y="1272" width="2" height="2" fill="#a8a8a8"/>
<rect x="958" y="1272" width="2" height="2" fill="#a8a8a8"/>
<rect x="952" y="1274" width="2" height="2" fill="#fff"/>
<rect x="954" y="1274" width="2" height="2" fill="#fff"/>
<rect x="956" y="1274" width="2" height="2" fill="#fff"/>
<rect x="958" y="1274" width="2" height="2" fill="#fff"/>
<rect x="950" y="1276" width="2" height="2" fill="#fff"/>
<rect x="960" y="1276" width="2" height="2" fill="#fff"/>
<rect x="964" y="1276" width="2" height="2" fill="#cfcfcf"/>
<rect x="948" y="1278" width="2" height="2" fill="#fff"/>
<rect x="962" y="1278" width="2" height="2" fill="#fff"/>
<rect x="964" y="1278" width="2" height="2" fill="#cfcfcf"/>
<rect x="960" y="1280" width="2" height="2" fill="#fff"/>
<rect x="962" y="1280" width="2" height="2" fill="#fff"/>
<rect x="964" y="1280" width="2" height="2" fill="#cfcfcf"/>
<rect x="944" y="1282" width="2" height="2" fill="#a8a8a8"/>
<rect x="946" y="1282" width="2" height="2" fill="#fff"/>
<rect x="948" y="1282" width="2" height="2" fill="#fff"/>
<rect x="950" y="1282" width="2" height="2" fill="#fff"/>
<rect x="944" y="1284" width="2" height="2" fill="#a8a8a8"/>
<rect x="946" y="1284" width="2" height="2" fill="#fff"/>
<rect x="948" y="1284" width="2" height="2" fill="#fff"/>
<rect x="962" y="1284" width="2" height="2" fill="#fff"/>
<rect x="944" y="1286" width="2" height="2" fill="#a8a8a8"/>
<rect x="946" y="1286" width="2" height="2" fill="#fff"/>
<rect x="950" y="1286" width="2" height="2" fill="#fff"/>
<rect x="960" y="1286" width="2" height="2" fill="#fff"/>
<rect x="952" y="1288" width="2" height="2" fill="#fff"/>
<rect x="954" y="1288" width="2" height="2" fill="#fff"/>
<rect x="956" y="1288" width="2" height="2" fill="#fff"/>
<rect x="958" y="1288" width="2" height="2" fill="#fff"/>
<rect x="952" y="1290" width="2" height="2" fill="#a8a8a8"/>
<rect x="954" y="1290" width="2" height="2" fill="#a8a8a8"/>
<rect x="956" y="1290" width="2" height="2" fill="#a8a8a8"/>
<rect x="958" y="1290" width="2" height="2" fill="#a8a8a8"/>
<rect x="974" y="1274" width="2" height="18" fill="#777"/>
<rect x="976" y="1272" width="18" height="2" fill="#aaa"/>
<rect x="976" y="1290" width="18" height="2" fill="#aaa"/>
<rect x="976" y="1274" width="18" height="16" fill="#fff"/>
<rect x="978" y="1276" width="2" height="12" fill="#3c3c3c"/>
<rect x="990" y="1276" width="2" height="12" fill="#3c3c3c"/>
<rect x="982" y="1276" width="4" height="4" fill="#3c3c3c"/>
<rect x="978" y="1282" width="14" height="2" fill="#3c3c3c"/>
<rect x="982" y="1286" width="6" height="2" fill="#3c3c3c"/>
<rect x="798" y="1304" width="32" height="134" fill="#424242"/>
<rect x="800" y="1306" width="30" height="28" fill="#454545"/>
<rect x="802" y="1308" width="24" height="24" fill="#000"/>
<rect x="828" y="1304" width="176" height="32" fill="#000"/>
<rect x="826" y="1308" width="4" height="26" fill="#454545"/>
<rect x="830" y="1336" width="174" height="2" fill="#444"/>
<rect x="798" y="1304" width="2" height="2" fill="#000"/><rect x="798" y="1334" width="2" height="2" fill="#000"/>
<g fill="#555"><rect x="800" y="1306" width="2" height="2"/><rect x="800" y="1332" width="2" height="2"/><rect x="826" y="1306" width="2" height="2"/><rect x="826" y="1332" width="2" height="2"/></g>
<g fill="#fff"><use href="#g114" x="834" y="1306"/><use href="#g101" x="850" y="1306"/><use href="#g110" x="866" y="1306"/><use href="#g97" x="882" y="1306"/><use href="#g109" x="898" y="1306"/><use href="#g101" x="914" y="1306"/></g>
<rect x="800" y="1340" width="30" height="28" fill="#454545"/>
<rect x="802" y="1342" width="24" height="24" fill="#000"/>
<rect x="828" y="1338" width="176" height="32" fill="#000"/>
<rect x="826" y="1342" width="4" height="26" fill="#454545"/>
<rect x="830" y="1370" width="174" height="2" fill="#444"/>
<rect x="798" y="1338" width="2" height="2" fill="#000"/><rect x="798" y="1368" width="2" height="2" fill="#000"/>
<g fill="#555"><rect x="800" y="1340" width="2" height="2"/><rect x="800" y="1366" width="2" height="2"/><rect x="826" y="1340" width="2" height="2"/><rect x="826" y="1366" width="2" height="2"/></g>
<g fill="#fff"><use href="#g100" x="834" y="1340"/><use href="#g101" x="850" y="1340"/><use href="#g108" x="866" y="1340"/><use href="#g101" x="882" y="1340"/><use href="#g116" x="898" y="1340"/><use href="#g101" x="914" y="1340"/></g>
<rect x="800" y="1374" width="30" height="28" fill="#454545"/>
<rect x="802" y="1376" width="24" height="24" fill="#000"/>
<rect x="828" y="1372" width="176" height="32" fill="#000"/>
<rect x="826" y="1376" width="4" height="26" fill="#454545"/>
<rect x="830" y="1404" width="174" height="2" fill="#444"/>
<rect x="798" y="1372" width="2" height="2" fill="#000"/><rect x="798" y="1402" width="2" height="2" fill="#000"/>
<g fill="#555"><rect x="800" y="1374" width="2" height="2"/><rect x="800" y="1400" width="2" height="2"/><rect x="826" y="1374" width="2" height="2"/><rect x="826" y="1400" width="2" height="2"/></g>
<g fill="#fff"><use href="#g116" x="834" y="1374"/><use href="#g114" x="850" y="1374"/><use href="#g105" x="866" y="1374"/><use href="#g109" x="882" y="1374"/></g>
<rect x="800" y="1408" width="30" height="28" fill="#454545"/>
<rect x="802" y="1410" width="24" height="24" fill="#000"/>
<rect x="828" y="1406" width="176" height="32" fill="#000"/>
<rect x="826" y="1410" width="4" height="26" fill="#454545"/>
<rect x="798" y="1406" width="2" height="2" fill="#000"/><rect x="798" y="1436" width="2" height="2" fill="#000"/>
<g fill="#555"><rect x="800" y="1408" width="2" height="2"/><rect x="800" y="1434" width="2" height="2"/><rect x="826" y="1408" width="2" height="2"/><rect x="826" y="1434" width="2" height="2"/></g>
<g fill="#fff"><use href="#g114" x="834" y="1408"/><use href="#g101" x="850" y="1408"/><use href="#g45" x="866" y="1408"/><use href="#g108" x="882" y="1408"/><use href="#g97" x="898" y="1408"/><use href="#g98" x="914" y="1408"/><use href="#g101" x="930" y="1408"/><use href="#g108" x="946" y="1408"/></g>
<rect x="1016" y="1264" width="212" height="168" fill="#424242"/>
<rect x="1018" y="1262" width="208" height="2" fill="#424242"/>
<rect x="1020" y="1266" width="204" height="36" fill="#3c3c3c"/>
<rect x="1020" y="1302" width="204" height="2" fill="#363636"/>
<g fill="none" stroke="#000" stroke-opacity="0.25" stroke-width="2"><use href="#g69" x="1026" y="1268"/><use href="#g100" x="1042" y="1268"/><use href="#g105" x="1058" y="1268"/><use href="#g116" x="1074" y="1268"/></g>
<g fill="#fff"><use href="#g69" x="1026" y="1268"/><use href="#g100" x="1042" y="1268"/><use href="#g105" x="1058" y="1268"/><use href="#g116" x="1074" y="1268"/></g>
<rect x="1172" y="1272" width="2" height="2" fill="#a8a8a8"/>
<rect x="1174" y="1272" width="2" height="2" fill="#a8a8a8"/>
<rect x="1176" y="1272" width="2" height="2" fill="#a8a8a8"/>
<rect x="1178" y="1272" width="2" height="2" fill="#a8a8a8"/>
<rect x="1172" y="1274" width="2" height="2" fill="#fff"/>
<rect x="1174" y="1274" width="2" height="2" fill="#fff"/>
<rect x="1176" y="1274" width="2" height="2" fill="#fff"/>
<rect x="1178" y="1274" width="2" height="2" fill="#fff"/>
<rect x="1170" y="1276" width="2" height="2" fill="#fff"/>
<rect x="1180" y="1276" width="2" height="2" fill="#fff"/>
<rect x="1184" y="1276" width="2" height="2" fill="#cfcfcf"/>
<rect x="1168" y="1278" width="2" height="2" fill="#fff"/>
<rect x="1182" y="1278" width="2" height="2" fill="#fff"/>
<rect x="1184" y="1278" width="2" height="2" fill="#cfcfcf"/>
<rect x="1180" y="1280" width="2" height="2" fill="#fff"/>
<rect x="1182" y="1280" width="2" height="2" fill="#fff"/>
<rect x="1184" y="1280" width="2" height="2" fill="#cfcfcf"/>
<rect x="1164" y="1282" width="2" height="2" fill="#a8a8a8"/>
<rect x="1166" y="1282" width="2" height="2" fill="#fff"/>
<rect x="1168" y="1282" width="2" height="2" fill="#fff"/>
<rect x="1170" y="1282" width="2" height="2" fill="#fff"/>
<rect x="1164" y="1284" width="2" height="2" fill="#a8a8a8"/>
<rect x="1166" y="1284" width="2" height="2" fill="#fff"/>
<rect x="1168" y="1284" width="2" height="2" fill="#fff"/>
<rect x="1182" y="1284" width="2" height="2" fill="#fff"/>
<rect x="1164" y="1286" width="2" height="2" fill="#a8a8a8"/>
<rect x="1166" y="1286" width="2" height="2" fill="#fff"/>
<rect x="1170" y="1286" width="2" height="2" fill="#fff"/>
<rect x="1180" y="1286" width="2" height="2" fill="#fff"/>
<rect x="1172" y="1288" width="2" height="2" fill="#fff"/>
<rect x="1174" y="1288" width="2" height="2" fill="#fff"/>
<rect x="1176" y="1288" width="2" height="2" fill="#fff"/>
<rect x="1178" y="1288" width="2" height="2" fill="#fff"/>
<rect x="1172" y="1290" width="2" height="2" fill="#a8a8a8"/>
<rect x="1174" y="1290" width="2" height="2" fill="#a8a8a8"/>
<rect x="1176" y="1290" width="2" height="2" fill="#a8a8a8"/>
<rect x="1178" y="1290" width="2" height="2" fill="#a8a8a8"/>
<rect x="1194" y="1274" width="2" height="18" fill="#777"/>
<rect x="1196" y="1272" width="18" height="2" fill="#aaa"/>
<rect x="1196" y="1290" width="18" height="2" fill="#aaa"/>
<rect x="1196" y="1274" width="18" height="16" fill="#fff"/>
<rect x="1198" y="1276" width="2" height="12" fill="#3c3c3c"/>
<rect x="1210" y="1276" width="2" height="12" fill="#3c3c3c"/>
<rect x="1202" y="1276" width="4" height="4" fill="#3c3c3c"/>
<rect x="1198" y="1282" width="14" height="2" fill="#3c3c3c"/>
<rect x="1202" y="1286" width="6" height="2" fill="#3c3c3c"/>
<rect x="1018" y="1304" width="32" height="134" fill="#424242"/>
<rect x="1020" y="1306" width="30" height="28" fill="#454545"/>
<rect x="1022" y="1308" width="24" height="24" fill="#000"/>
<rect x="1048" y="1304" width="176" height="32" fill="#000"/>
<rect x="1046" y="1308" width="4" height="26" fill="#454545"/>
<rect x="1050" y="1336" width="174" height="2" fill="#444"/>
<rect x="1018" y="1304" width="2" height="2" fill="#000"/><rect x="1018" y="1334" width="2" height="2" fill="#000"/>
<g fill="#555"><rect x="1020" y="1306" width="2" height="2"/><rect x="1020" y="1332" width="2" height="2"/><rect x="1046" y="1306" width="2" height="2"/><rect x="1046" y="1332" width="2" height="2"/></g>
<g fill="#fff"><use href="#g114" x="1054" y="1306"/><use href="#g101" x="1070" y="1306"/><use href="#g110" x="1086" y="1306"/><use href="#g97" x="1102" y="1306"/><use href="#g109" x="1118" y="1306"/><use href="#g101" x="1134" y="1306"/></g>
<rect x="1020" y="1340" width="30" height="28" fill="#454545"/>
<rect x="1022" y="1342" width="24" height="24" fill="#000"/>
<rect x="1048" y="1338" width="176" height="32" fill="#000"/>
<rect x="1046" y="1342" width="4" height="26" fill="#454545"/>
<rect x="1050" y="1370" width="174" height="2" fill="#444"/>
<rect x="1018" y="1338" width="2" height="2" fill="#000"/><rect x="1018" y="1368" width="2" height="2" fill="#000"/>
<g fill="#555"><rect x="1020" y="1340" width="2" height="2"/><rect x="1020" y="1366" width="2" height="2"/><rect x="1046" y="1340" width="2" height="2"/><rect x="1046" y="1366" width="2" height="2"/></g>
<g fill="#fff"><use href="#g100" x="1054" y="1340"/><use href="#g101" x="1070" y="1340"/><use href="#g108" x="1086" y="1340"/><use href="#g101" x="1102" y="1340"/><use href="#g116" x="1118" y="1340"/><use href="#g101" x="1134" y="1340"/></g>
<rect x="1020" y="1374" width="30" height="28" fill="#454545"/>
<rect x="1022" y="1376" width="24" height="24" fill="#000"/>
<rect x="1048" y="1372" width="176" height="32" fill="#000"/>
<rect x="1046" y="1376" width="4" height="26" fill="#454545"/>
<rect x="1050" y="1404" width="174" height="2" fill="#444"/>
<rect x="1018" y="1372" width="2" height="2" fill="#000"/><rect x="1018" y="1402" width="2" height="2" fill="#000"/>
<g fill="#555"><rect x="1020" y="1374" width="2" height="2"/><rect x="1020" y="1400" width="2" height="2"/><rect x="1046" y="1374" width="2" height="2"/><rect x="1046" y="1400" width="2" height="2"/></g>
<g fill="#fff"><use href="#g116" x="1054" y="1374"/><use href="#g114" x="1070" y="1374"/><use href="#g105" x="1086" y="1374"/><use href="#g109" x="1102" y="1374"/></g>
<rect x="1020" y="1408" width="30" height="28" fill="#454545"/>
<rect x="1022" y="1410" width="24" height="24" fill="#000"/>
<rect x="1048" y="1406" width="176" height="32" fill="#000"/>
<rect x="1046" y="1410" width="4" height="26" fill="#454545"/>
<rect x="1018" y="1406" width="2" height="2" fill="#000"/><rect x="1018" y="1436" width="2" height="2" fill="#000"/>
<g fill="#555"><rect x="1020" y="1408" width="2" height="2"/><rect x="1020" y="1434" width="2" height="2"/><rect x="1046" y="1408" width="2" height="2"/><rect x="1046" y="1434" width="2" height="2"/></g>
<g fill="#fff"><use href="#g114" x="1054" y="1408"/><use href="#g101" x="1070" y="1408"/><use href="#g45" x="1086" y="1408"/><use href="#g108" x="1102" y="1408"/><use href="#g97" x="1118" y="1408"/><use href="#g98" x="1134" y="1408"/><use href="#g101" x="1150" y="1408"/><use href="#g108" x="1166" y="1408"/></g>
<rect x="1236" y="1264" width="212" height="168" fill="#424242"/>
<rect x="1238" y="1262" width="208" height="2" fill="#424242"/>
<rect x="1240" y="1266" width="204" height="36" fill="#3c3c3c"/>
<rect x="1240" y="1302" width="204" height="2" fill="#363636"/>
<g fill="none" stroke="#000" stroke-opacity="0.25" stroke-width="2"><use href="#g69" x="1246" y="1268"/><use href="#g100" x="1262" y="1268"/><use href="#g105" x="1278" y="1268"/><use href="#g116" x="1294" y="1268"/></g>
<g fill="#fff"><use href="#g69" x="1246" y="1268"/><use href="#g100" x="1262" y="1268"/><use href="#g105" x="1278" y="1268"/><use href="#g116" x="1294" y="1268"/></g>
<rect x="1392" y="1272" width="2" height="2" fill="#a8a8a8"/>
<rect x="1394" y="1272" width="2" height="2" fill="#a8a8a8"/>
<rect x="1396" y="1272" width="2" height="2" fill="#a8a8a8"/>
<rect x="1398" y="1272" width="2" height="2" fill="#a8a8a8"/>
<rect x="1392" y="1274" width="2" height="2" fill="#fff"/>
<rect x="1394" y="1274" width="2" height="2" fill="#fff"/>
<rect x="1396" y="1274" width="2" height="2" fill="#fff"/>
<rect x="1398" y="1274" width="2" height="2" fill="#fff"/>
<rect x="1390" y="1276" width="2" height="2" fill="#fff"/>
<rect x="1400" y="1276" width="2" height="2" fill="#fff"/>
<rect x="1404" y="1276" width="2" height="2" fill="#cfcfcf"/>
<rect x="1388" y="1278" width="2" height="2" fill="#fff"/>
<rect x="1402" y="1278" width="2" height="2" fill="#fff"/>
<rect x="1404" y="1278" width="2" height="2" fill="#cfcfcf"/>
<rect x="1400" y="1280" width="2" height="2" fill="#fff"/>
<rect x="1402" y="1280" width="2" height="2" fill="#fff"/>
<rect x="1404" y="1280" width="2" height="2" fill="#cfcfcf"/>
<rect x="1384" y="1282" width="2" height="2" fill="#a8a8a8"/>
<rect x="1386" y="1282" width="2" height="2" fill="#fff"/>
<rect x="1388" y="1282" width="2" height="2" fill="#fff"/>
<rect x="1390" y="1282" width="2" height="2" fill="#fff"/>
<rect x="1384" y="1284" width="2" height="2" fill="#a8a8a8"/>
<rect x="1386" y="1284" width="2" height="2" fill="#fff"/>
<rect x="1388" y="1284" width="2" height="2" fill="#fff"/>
<rect x="1402" y="1284" width="2" height="2" fill="#fff"/>
<rect x="1384" y="1286" width="2" height="2" fill="#a8a8a8"/>
<rect x="1386" y="1286" width="2" height="2" fill="#fff"/>
<rect x="1390" y="1286" width="2" height="2" fill="#fff"/>
<rect x="1400" y="1286" width="2" height="2" fill="#fff"/>
<rect x="1392" y="1288" width="2" height="2" fill="#fff"/>
<rect x="1394" y="1288" width="2" height="2" fill="#fff"/>
<rect x="1396" y="1288" width="2" height="2" fill="#fff"/>
<rect x="1398" y="1288" width="2" height="2" fill="#fff"/>
<rect x="1392" y="1290" width="2" height="2" fill="#a8a8a8"/>
<rect x="1394" y="1290" width="2" height="2" fill="#a8a8a8"/>
<rect x="1396" y="1290" width="2" height="2" fill="#a8a8a8"/>
<rect x="1398" y="1290" width="2" height="2" fill="#a8a8a8"/>
<rect x="1414" y="1274" width="2" height="18" fill="#777"/>
<rect x="1416" y="1272" width="18" height="2" fill="#aaa"/>
<rect x="1416" y="1290" width="18" height="2" fill="#aaa"/>
<rect x="1416" y="1274" width="18" height="16" fill="#fff"/>
<rect x="1418" y="1276" width="2" height="12" fill="#3c3c3c"/>
<rect x="1430" y="1276" width="2" height="12" fill="#3c3c3c"/>
<rect x="1422" y="1276" width="4" height="4" fill="#3c3c3c"/>
<rect x="1418" y="1282" width="14" height="2" fill="#3c3c3c"/>
<rect x="1422" y="1286" width="6" height="2" fill="#3c3c3c"/>
<rect x="1238" y="1304" width="32" height="134" fill="#424242"/>
<rect x="1240" y="1306" width="30" height="28" fill="#454545"/>
<rect x="1242" y="1308" width="24" height="24" fill="#000"/>
<rect x="1268" y="1304" width="176" height="32" fill="#000"/>
<rect x="1266" y="1308" width="4" height="26" fill="#454545"/>
<rect x="1270" y="1336" width="174" height="2" fill="#444"/>
<rect x="1238" y="1304" width="2" height="2" fill="#000"/><rect x="1238" y="1334" width="2" height="2" fill="#000"/>
<g fill="#555"><rect x="1240" y="1306" width="2" height="2"/><rect x="1240" y="1332" width="2" height="2"/><rect x="1266" y="1306" width="2" height="2"/><rect x="1266" y="1332" width="2" height="2"/></g>
<g fill="#fff"><use href="#g114" x="1274" y="1306"/><use href="#g101" x="1290" y="1306"/><use href="#g110" x="1306" y="1306"/><use href="#g97" x="1322" y="1306"/><use href="#g109" x="1338" y="1306"/><use href="#g101" x="1354" y="1306"/></g>
<rect x="1240" y="1340" width="30" height="28" fill="#454545"/>
<rect x="1242" y="1342" width="24" height="24" fill="#000"/>
<rect x="1268" y="1338" width="176" height="32" fill="#000"/>
<rect x="1266" y="1342" width="4" height="26" fill="#454545"/>
<rect x="1270" y="1370" width="174" height="2" fill="#444"/>
<rect x="1238" y="1338" width="2" height="2" fill="#000"/><rect x="1238" y="1368" width="2" height="2" fill="#000"/>
<g fill="#555"><rect x="1240" y="1340" width="2" height="2"/><rect x="1240" y="1366" width="2" height="2"/><rect x="1266" y="1340" width="2" height="2"/><rect x="1266" y="1366" width="2" height="2"/></g>
<g fill="#fff"><use href="#g100" x="1274" y="1340"/><use href="#g101" x="1290" y="1340"/><use href="#g108" x="1306" y="1340"/><use href="#g101" x="1322" y="1340"/><use href="#g116" x="1338" y="1340"/><use href="#g101" x="1354" y="1340"/></g>
<rect x="1240" y="1374" width="30" height="28" fill="#454545"/>
<rect x="1242" y="1376" width="24" height="24" fill="#000"/>
<rect x="1268" y="1372" width="176" height="32" fill="#000"/>
<rect x="1266" y="1376" width="4" height="26" fill="#454545"/>
<rect x="1270" y="1404" width="174" height="2" fill="#444"/>
<rect x="1238" y="1372" width="2" height="2" fill="#000"/><rect x="1238" y="1402" width="2" height="2" fill="#000"/>
<g fill="#555"><rect x="1240" y="1374" width="2" height="2"/><rect x="1240" y="1400" width="2" height="2"/><rect x="1266" y="1374" width="2" height="2"/><rect x="1266" y="1400" width="2" height="2"/></g>
<g fill="#fff"><use href="#g116" x="1274" y="1374"/><use href="#g114" x="1290" y="1374"/><use href="#g105" x="1306" y="1374"/><use href="#g109" x="1322" y="1374"/></g>
<rect x="1240" y="1408" width="30" height="28" fill="#454545"/>
<rect x="1242" y="1410" width="24" height="24" fill="#000"/>
<rect x="1268" y="1406" width="176" height="32" fill="#000"/>
<rect x="1266" y="1410" width="4" height="26" fill="#454545"/>
<rect x="1238" y="1406" width="2" height="2" fill="#000"/><rect x="1238" y="1436" width="2" height="2" fill="#000"/>
<g fill="#555"><rect x="1240" y="1408" width="2" height="2"/><rect x="1240" y="1434" width="2" height="2"/><rect x="1266" y="1408" width="2" height="2"/><rect x="1266" y="1434" width="2" height="2"/></g>
<g fill="#fff"><use href="#g114" x="1274" y="1408"/><use href="#g101" x="1290" y="1408"/><use href="#g45" x="1306" y="1408"/><use href="#g108" x="1322" y="1408"/><use href="#g97" x="1338" y="1408"/><use href="#g98" x="1354" y="1408"/><use href="#g101" x="1370" y="1408"/><use href="#g108" x="1386" y="1408"/></g>
<rect x="1456" y="1264" width="212" height="168" fill="#424242"/>
<rect x="1458" y="1262" width="208" height="2" fill="#424242"/>
<rect x="1460" y="1266" width="204" height="36" fill="#3c3c3c"/>
<rect x="1460" y="1302" width="204" height="2" fill="#363636"/>
<g fill="none" stroke="#000" stroke-opacity="0.25" stroke-width="2"><use href="#g69" x="1466" y="1268"/><use href="#g100" x="1482" y="1268"/><use href="#g105" x="1498" y="1268"/><use href="#g116" x="1514" y="1268"/></g>
<g fill="#fff"><use href="#g69" x="1466" y="1268"/><use href="#g100" x="1482" y="1268"/><use href="#g105" x="1498" y="1268"/><use href="#g116" x="1514" y="1268"/></g>
<rect x="1612" y="1272" width="2" height="2" fill="#a8a8a8"/>
<rect x="1614" y="1272" width="2" height="2" fill="#a8a8a8"/>
<rect x="1616" y="1272" width="2" height="2" fill="#a8a8a8"/>
<rect x="1618" y="1272" width="2" height="2" fill="#a8a8a8"/>
<rect x="1612" y="1274" width="2" height="2" fill="#fff"/>
<rect x="1614" y="1274" width="2" height="2" fill="#fff"/>
<rect x="1616" y="1274" width="2" height="2" fill="#fff"/>
<rect x="1618" y="1274" width="2" height="2" fill="#fff"/>
<rect x="1610" y="1276" width="2" height="2" fill="#fff"/>
<rect x="1620" y="1276" width="2" height="2" fill="#fff"/>
<rect x="1624" y="1276" width="2" height="2" fill="#cfcfcf"/>
<rect x="1608" y="1278" width="2" height="2" fill="#fff"/>
<rect x="1622" y="1278" width="2" height="2" fill="#fff"/>
<rect x="1624" y="1278" width="2" height="2" fill="#cfcfcf"/>
<rect x="1620" y="1280" width="2" height="2" fill="#fff"/>
<rect x="1622" y="1280" width="2" height="2" fill="#fff"/>
<rect x="1624" y="1280" width="2" height="2" fill="#cfcfcf"/>
<rect x="1604" y="1282" width="2" height="2" fill="#a8a8a8"/>
<rect x="1606" y="1282" width="2" height="2" fill="#fff"/>
<rect x="1608" y="1282" width="2" height="2" fill="#fff"/>
<rect x="1610" y="1282" width="2" height="2" fill="#fff"/>
<rect x="1604" y="1284" width="2" height="2" fill="#a8a8a8"/>
<rect x="1606" y="1284" width="2" height="2" fill="#fff"/>
<rect x="1608" y="1284" width="2" height="2" fill="#fff"/>
<rect x="1622" y="1284" width="2" height="2" fill="#fff"/>
<rect x="1604" y="1286" width="2" height="2" fill="#a8a8a8"/>
<rect x="1606" y="1286" width="2" height="2" fill="#fff"/>
<rect x="1610" y="1286" width="2" height="2" fill="#fff"/>
<rect x="1620" y="1286" width="2" height="2" fill="#fff"/>
<rect x="1612" y="1288" width="2" height="2" fill="#fff"/>
<rect x="1614" y="1288" width="2" height="2" fill="#fff"/>
<rect x="1616" y="1288" width="2" height="2" fill="#fff"/>
<rect x="1618" y="1288" width="2" height="2" fill="#fff"/>
<rect x="1612" y="1290" width="2" height="2" fill="#a8a8a8"/>
<rect x="1614" y="1290" width="2" height="2" fill="#a8a8a8"/>
<rect x="1616" y="1290" width="2" height="2" fill="#a8a8a8"/>
<rect x="1618" y="1290" width="2" height="2" fill="#a8a8a8"/>
<rect x="1634" y="1274" width="2" height="18" fill="#777"/>
<rect x="1636" y="1272" width="18" height="2" fill="#aaa"/>
<rect x="1636" y="1290" width="18" height="2" fill="#aaa"/>
<rect x="1636" y="1274" width="18" height="16" fill="#fff"/>
<rect x="1638" y="1276" width="2" height="12" fill="#3c3c3c"/>
<rect x="1650" y="1276" width="2" height="12" fill="#3c3c3c"/>
<rect x="1642" y="1276" width="4" height="4" fill="#3c3c3c"/>
<rect x="1638" y="1282" width="14" height="2" fill="#3c3c3c"/>
<rect x="1642" y="1286" width="6" height="2" fill="#3c3c3c"/>
<rect x="1458" y="1304" width="32" height="134" fill="#424242"/>
<rect x="1460" y="1306" width="30" height="28" fill="#454545"/>
<rect x="1462" y="1308" width="24" height="24" fill="#000"/>
<rect x="1488" y="1304" width="176" height="32" fill="#000"/>
<rect x="1486" y="1308" width="4" height="26" fill="#454545"/>
<rect x="1490" y="1336" width="174" height="2" fill="#444"/>
<rect x="1458" y="1304" width="2" height="2" fill="#000"/><rect x="1458" y="1334" width="2" height="2" fill="#000"/>
<g fill="#555"><rect x="1460" y="1306" width="2" height="2"/><rect x="1460" y="1332" width="2" height="2"/><rect x="1486" y="1306" width="2" height="2"/><rect x="1486" y="1332" width="2" height="2"/></g>
<g fill="#fff"><use href="#g114" x="1494" y="1306"/><use href="#g101" x="1510" y="1306"/><use href="#g110" x="1526" y="1306"/><use href="#g97" x="1542" y="1306"/><use href="#g109" x="1558" y="1306"/><use href="#g101" x="1574" y="1306"/></g>
<rect x="1460" y="1340" width="30" height="28" fill="#454545"/>
<rect x="1462" y="1342" width="24" height="24" fill="#000"/>
<rect x="1488" y="1338" width="176" height="32" fill="#000"/>
<rect x="1486" y="1342" width="4" height="26" fill="#454545"/>
<rect x="1490" y="1370" width="174" height="2" fill="#444"/>
<rect x="1458" y="1338" width="2" height="2" fill="#000"/><rect x="1458" y="1368" width="2" height="2" fill="#000"/>
<g fill="#555"><rect x="1460" y="1340" width="2" height="2"/><rect x="1460" y="1366" width="2" height="2"/><rect x="1486" y="1340" width="2" height="2"/><rect x="1486" y="1366" width="2" height="2"/></g>
<g fill="#fff"><use href="#g100" x="1494" y="1340"/><use href="#g101" x="1510" y="1340"/><use href="#g108" x="1526" y="1340"/><use href="#g101" x="1542" y="1340"/><use href="#g116" x="1558" y="1340"/><use href="#g101" x="1574" y="1340"/></g>
<rect x="1460" y="1374" width="30" height="28" fill="#454545"/>
<rect x="1462" y="1376" width="24" height="24" fill="#000"/>
<rect x="1488" y="1372" width="176" height="32" fill="#000"/>
<rect x="1486" y="1376" width="4" height="26" fill="#454545"/>
<rect x="1490" y="1404" width="174" height="2" fill="#444"/>
<rect x="1458" y="1372" width="2" height="2" fill="#000"/><rect x="1458" y="1402" width="2" height="2" fill="#000"/>
<g fill="#555"><rect x="1460" y="1374" width="2" height="2"/><rect x="1460" y="1400" width="2" height="2"/><rect x="1486" y="1374" width="2" height="2"/><rect x="1486" y="1400" width="2" height="2"/></g>
<g fill="#fff"><use href="#g116" x="1494" y="1374"/><use href="#g114" x="1510" y="1374"/><use href="#g105" x="1526" y="1374"/><use href="#g109" x="1542" y="1374"/></g>
<rect x="1460" y="1408" width="30" height="28" fill="#454545"/>
<rect x="1462" y="1410" width="24" height="24" fill="#000"/>
<rect x="1488" y="1406" width="176" height="32" fill="#000"/>
<rect x="1486" y="1410" width="4" height="26" fill="#454545"/>
<rect x="1458" y="1406" width="2" height="2" fill="#000"/><rect x="1458" y="1436" width="2" height="2" fill="#000"/>
<g fill="#555"><rect x="1460" y="1408" width="2" height="2"/><rect x="1460" y="1434" width="2" height="2"/><rect x="1486" y="1408" width="2" height="2"/><rect x="1486" y="1434" width="2" height="2"/></g>
<g fill="#fff"><use href="#g114" x="1494" y="1408"/><use href="#g101" x="1510" y="1408"/><use href="#g45" x="1526" y="1408"/><use href="#g108" x="1542" y="1408"/><use href="#g97" x="1558" y="1408"/><use href="#g98" x="1574" y="1408"/><use href="#g101" x="1590" y="1408"/><use href="#g108" x="1606" y="1408"/></g>
<rect x="1676" y="1264" width="212" height="168" fill="#424242"/>
<rect x="1678" y="1262" width="208" height="2" fill="#424242"/>
<rect x="1680" y="1266" width="204" height="36" fill="#3c3c3c"/>
<rect x="1680" y="1302" width="204" height="2" fill="#363636"/>
<g fill="none" stroke="#000" stroke-opacity="0.25" stroke-width="2"><use href="#g69" x="1686" y="1268"/><use href="#g100" x="1702" y="1268"/><use href="#g105" x="1718" y="1268"/><use href="#g116" x="1734" y="1268"/></g>
<g fill="#fff"><use href="#g69" x="1686" y="1268"/><use href="#g100" x="1702" y="1268"/><use href="#g105" x="1718" y="1268"/><use href="#g116" x="1734" y="1268"/></g>
<rect x="1832" y="1272" width="2" height="2" fill="#a8a8a8"/>
<rect x="1834" y="1272" width="2" height="2" fill="#a8a8a8"/>
<rect x="1836" y="1272" width="2" height="2" fill="#a8a8a8"/>
<rect x="1838" y="1272" width="2" height="2" fill="#a8a8a8"/>
<rect x="1832" y="1274" width="2" height="2" fill="#fff"/>
<rect x="1834" y="1274" width="2" height="2" fill="#fff"/>
<rect x="1836" y="1274" width="2" height="2" fill="#fff"/>
<rect x="1838" y="1274" width="2" height="2" fill="#fff"/>
<rect x="1830" y="1276" width="2" height="2" fill="#fff"/>
<rect x="1840" y="1276" width="2" height="2" fill="#fff"/>
<rect x="1844" y="1276" width="2" height="2" fill="#cfcfcf"/>
<rect x="1828" y="1278" width="2" height="2" fill="#fff"/>
<rect x="1842" y="1278" width="2" height="2" fill="#fff"/>
<rect x="1844" y="1278" width="2" height="2" fill="#cfcfcf"/>
<rect x="1840" y="1280" width="2" height="2" fill="#fff"/>
<rect x="1842" y="1280" width="2" height="2" fill="#fff"/>
<rect x="1844" y="1280" width="2" height="2" fill="#cfcfcf"/>
<rect x="1824" y="1282" width="2" height="2" fill="#a8a8a8"/>
<rect x="1826" y="1282" width="2" height="2" fill="#fff"/>
<rect x="1828" y="1282" width="2" height="2" fill="#fff"/>
<rect x="1830" y="1282" width="2" height="2" fill="#fff"/>
<rect x="1824" y="1284" width="2" height="2" fill="#a8a8a8"/>
<rect x="1826" y="1284" width="2" height="2" fill="#fff"/>
<rect x="1828" y="1284" width="2" height="2" fill="#fff"/>
<rect x="1842" y="1284" width="2" height="2" fill="#fff"/>
<rect x="1824" y="1286" width="2" height="2" fill="#a8a8a8"/>
<rect x="1826" y="1286" width="2" height="2" fill="#fff"/>
<rect x="1830" y="1286" width="2" height="2" fill="#fff"/>
<rect x="1840" y="1286" width="2" height="2" fill="#fff"/>
<rect x="1832" y="1288" width="2" height="2" fill="#fff"/>
<rect x="1834" y="1288" width="2" height="2" fill="#fff"/>
<rect x="1836" y="1288" width="2" height="2" fill="#fff"/>
<rect x="1838" y="1288" width="2" height="2" fill="#fff"/>
<rect x="1832" y="1290" width="2" height="2" fill="#a8a8a8"/>
<rect x="1834" y="1290" width="2" height="2" fill="#a8a8a8"/>
<rect x="1836" y="1290" width="2" height="2" fill="#a8a8a8"/>
<rect x="1838" y="1290" width="2" height="2" fill="#a8a8a8"/>
<rect x="1854" y="1274" width="2" height="18" fill="#777"/>
<rect x="1856" y="1272" width="18" height="2" fill="#aaa"/>
<rect x="1856" y="1290" width="18" height="2" fill="#aaa"/>
<rect x="1856" y="1274" width="18" height="16" fill="#fff"/>
<rect x="1858" y="1276" width="2" height="12" fill="#3c3c3c"/>
<rect x="1870" y="1276" width="2" height="12" fill="#3c3c3c"/>
<rect x="1862" y="1276" width="4" height="4" fill="#3c3c3c"/>
<rect x="1858" y="1282" width="14" height="2" fill="#3c3c3c"/>
<rect x="1862" y="1286" width="6" height="2" fill="#3c3c3c"/>
<rect x="1678" y="1304" width="32" height="134" fill="#424242"/>
<rect x="1680" y="1306" width="30" height="28" fill="#454545"/>
<rect x="1682" y="1308" width="24" height="24" fill="#000"/>
<rect x="1708" y="1304" width="176" height="32" fill="#000"/>
<rect x="1706" y="1308" width="4" height="26" fill="#454545"/>
<rect x="1710" y="1336" width="174" height="2" fill="#444"/>
<rect x="1678" y="1304" width="2" height="2" fill="#000"/><rect x="1678" y="1334" width="2" height="2" fill="#000"/>
<g fill="#555"><rect x="1680" y="1306" width="2" height="2"/><rect x="1680" y="1332" width="2" height="2"/><rect x="1706" y="1306" width="2" height="2"/><rect x="1706" y="1332" width="2" height="2"/></g>
<g fill="#fff"><use href="#g114" x="1714" y="1306"/><use href="#g101" x="1730" y="1306"/><use href="#g110" x="1746" y="1306"/><use href="#g97" x="1762" y="1306"/><use href="#g109" x="1778" y="1306"/><use href="#g101" x="1794" y="1306"/></g>
<rect x="1680" y="1340" width="30" height="28" fill="#454545"/>
<rect x="1682" y="1342" width="24" height="24" fill="#000"/>
<rect x="1708" y="1338" width="176" height="32" fill="#000"/>
<rect x="1706" y="1342" width="4" height="26" fill="#454545"/>
<rect x="1710" y="1370" width="174" height="2" fill="#444"/>
<rect x="1678" y="1338" width="2" height="2" fill="#000"/><rect x="1678" y="1368" width="2" height="2" fill="#000"/>
<g fill="#555"><rect x="1680" y="1340" width="2" height="2"/><rect x="1680" y="1366" width="2" height="2"/><rect x="1706" y="1340" width="2" height="2"/><rect x="1706" y="1366" width="2" height="2"/></g>
<g fill="#fff"><use href="#g100" x="1714" y="1340"/><use href="#g101" x="1730" y="1340"/><use href="#g108" x="1746" y="1340"/><use href="#g101" x="1762" y="1340"/><use href="#g116" x="1778" y="1340"/><use href="#g101" x="1794" y="1340"/></g>
<rect x="1680" y="1374" width="30" height="28" fill="#454545"/>
<rect x="1682" y="1376" width="24" height="24" fill="#000"/>
<rect x="1708" y="1372" width="176" height="32" fill="#000"/>
<rect x="1706" y="1376" width="4" height="26" fill="#454545"/>
<rect x="1710" y="1404" width="174" height="2" fill="#444"/>
<rect x="1678" y="1372" width="2" height="2" fill="#000"/><rect x="1678" y="1402" width="2" height="2" fill="#000"/>
<g fill="#555"><rect x="1680" y="1374" width="2" height="2"/><rect x="1680" y="1400" width="2" height="2"/><rect x="1706" y="1374" width="2" height="2"/><rect x="1706" y="1400" width="2" height="2"/></g>
<g fill="#fff"><use href="#g116" x="1714" y="1374"/><use href="#g114" x="1730" y="1374"/><use href="#g105" x="1746" y="1374"/><use href="#g109" x="1762" y="1374"/></g>
<rect x="1680" y="1408" width="30" height="28" fill="#454545"/>
<rect x="1682" y="1410" width="24" height="24" fill="#000"/>
<rect x="1708" y="1406" width="176" height="32" fill="#000"/>
<rect x="1706" y="1410" width="4" height="26" fill="#454545"/>
<rect x="1678" y="1406" width="2" height="2" fill="#000"/><rect x="1678" y="1436" width="2" height="2" fill="#000"/>
<g fill="#555"><rect x="1680" y="1408" width="2" height="2"/><rect x="1680" y="1434" width="2" height="2"/><rect x="1706" y="1408" width="2" height="2"/><rect x="1706" y="1434" width="2" height="2"/></g>
<g fill="#fff"><use href="#g114" x="1714" y="1408"/><use href="#g101" x="1730" y="1408"/><use href="#g45" x="1746" y="1408"/><use href="#g108" x="1762" y="1408"/><use href="#g97" x="1778" y="1408"/><use href="#g98" x="1794" y="1408"/><use href="#g101" x="1810" y="1408"/><use href="#g108" x="1826" y="1408"/></g>
<rect x="1896" y="1264" width="212" height="168" fill="#424242"/>
<rect x="1898" y="1262" width="208" height="2" fill="#424242"/>
<rect x="1900" y="1266" width="204" height="36" fill="#3c3c3c"/>
<rect x="1900" y="1302" width="204" height="2" fill="#363636"/>
<g fill="none" stroke="#000" stroke-opacity="0.25" stroke-width="2"><use href="#g69" x="1906" y="1268"/><use href="#g100" x="1922" y="1268"/><use href="#g105" x="1938" y="1268"/><use href="#g116" x="1954" y="1268"/></g>
<g fill="#fff"><use href="#g69" x="1906" y="1268"/><use href="#g100" x="1922" y="1268"/><use href="#g105" x="1938" y="1268"/><use href="#g116" x="1954" y="1268"/></g>
<rect x="2052" y="1272" width="2" height="2" fill="#a8a8a8"/>
<rect x="2054" y="1272" width="2" height="2" fill="#a8a8a8"/>
<rect x="2056" y="1272" width="2" height="2" fill="#a8a8a8"/>
<rect x="2058" y="1272" width="2" height="2" fill="#a8a8a8"/>
<rect x="2052" y="1274" width="2" height="2" fill="#fff"/>
<rect x="2054" y="1274" width="2" height="2" fill="#fff"/>
<rect x="2056" y="1274" width="2" height="2" fill="#fff"/>
<rect x="2058" y="1274" width="2" height="2" fill="#fff"/>
<rect x="2050" y="1276" width="2" height="2" fill="#fff"/>
<rect x="2060" y="1276" width="2" height="2" fill="#fff"/>
<rect x="2064" y="1276" width="2" height="2" fill="#cfcfcf"/>
<rect x="2048" y="1278" width="2" height="2" fill="#fff"/>
<rect x="2062" y="1278" width="2" height="2" fill="#fff"/>
<rect x="2064" y="1278" width="2" height="2" fill="#cfcfcf"/>
<rect x="2060" y="1280" width="2" height="2" fill="#fff"/>
<rect x="2062" y="1280" width="2" height="2" fill="#fff"/>
<rect x="2064" y="1280" width="2" height="2" fill="#cfcfcf"/>
<rect x="2044" y="1282" width="2" height="2" fill="#a8a8a8"/>
<rect x="2046" y="1282" width="2" height="2" fill="#fff"/>
<rect x="2048" y="1282" width="2" height="2" fill="#fff"/>
<rect x="2050" y="1282" width="2" height="2" fill="#fff"/>
<rect x="2044" y="1284" width="2" height="2" fill="#a8a8a8"/>
<rect x="2046" y="1284" width="2" height="2" fill="#fff"/>
<rect x="2048" y="1284" width="2" height="2" fill="#fff"/>
<rect x="2062" y="1284" width="2" height="2" fill="#fff"/>
<rect x="2044" y="1286" width="2" height="2" fill="#a8a8a8"/>
<rect x="2046" y="1286" width="2" height="2" fill="#fff"/>
<rect x="2050" y="1286" width="2" height="2" fill="#fff"/>
<rect x="2060" y="1286" width="2" height="2" fill="#fff"/>
<rect x="2052" y="1288" width="2" height="2" fill="#fff"/>
<rect x="2054" y="1288" width="2" height="2" fill="#fff"/>
<rect x="2056" y="1288" width="2" height="2" fill="#fff"/>
<rect x="2058" y="1288" width="2" height="2" fill="#fff"/>
<rect x="2052" y="1290" width="2" height="2" fill="#a8a8a8"/>
<rect x="2054" y="1290" width="2" height="2" fill="#a8a8a8"/>
<rect x="2056" y="1290" width="2" height="2" fill="#a8a8a8"/>
<rect x="2058" y="1290" width="2" height="2" fill="#a8a8a8"/>
<rect x="2074" y="1274" width="2" height="18" fill="#777"/>
<rect x="2076" y="1272" width="18" height="2" fill="#aaa"/>
<rect x="2076" y="1290" width="18" height="2" fill="#aaa"/>
<rect x="2076" y="1274" width="18" height="16" fill="#fff"/>
<rect x="2078" y="1276" width="2" height="12" fill="#3c3c3c"/>
<rect x="2090" y="1276" width="2" height="12" fill="#3c3c3c"/>
<rect x="2082" y="1276" width="4" height="4" fill="#3c3c3c"/>
<rect x="2078" y="1282" width="14" height="2" fill="#3c3c3c"/>
<rect x="2082" y="1286" width="6" height="2" fill="#3c3c3c"/>
<rect x="1898" y="1304" width="32" height="134" fill="#424242"/>
<rect x="1900" y="1306" width="30" height="28" fill="#454545"/>
<rect x="1902" y="1308" width="24" height="24" fill="#000"/>
<rect x="1928" y="1304" width="176" height="32" fill="#000"/>
<rect x="1926" y="1308" width="4" height="26" fill="#454545"/>
<rect x="1930" y="1336" width="174" height="2" fill="#444"/>
<rect x="1898" y="1304" width="2" height="2" fill="#000"/><rect x="1898" y="1334" width="2" height="2" fill="#000"/>
<g fill="#555"><rect x="1900" y="1306" width="2" height="2"/><rect x="1900" y="1332" width="2" height="2"/><rect x="1926" y="1306" width="2" height="2"/><rect x="1926" y="1332" width="2" height="2"/></g>
<g fill="#fff"><use href="#g114" x="1934" y="1306"/><use href="#g101" x="1950" y="1306"/><use href="#g110" x="1966" y="1306"/><use href="#g97" x="1982" y="1306"/><use href="#g109" x="1998" y="1306"/><use href="#g101" x="2014" y="1306"/></g>
<rect x="1900" y="1340" width="30" height="28" fill="#454545"/>
<rect x="1902" y="1342" width="24" height="24" fill="#000"/>
<rect x="1928" y="1338" width="176" height="32" fill="#000"/>
<rect x="1926" y="1342" width="4" height="26" fill="#454545"/>
<rect x="1930" y="1370" width="174" height="2" fill="#444"/>
<rect x="1898" y="1338" width="2" height="2" fill="#000"/><rect x="1898" y="1368" width="2" height="2" fill="#000"/>
<g fill="#555"><rect x="1900" y="1340" width="2" height="2"/><rect x="1900" y="1366" width="2" height="2"/><rect x="1926" y="1340" width="2" height="2"/><rect x="1926" y="1366" width="2" height="2"/></g>
<g fill="#fff"><use href="#g100" x="1934" y="1340"/><use href="#g101" x="1950" y="1340"/><use href="#g108" x="1966" y="1340"/><use href="#g101" x="1982" y="1340"/><use href="#g116" x="1998" y="1340"/><use href="#g101" x="2014" y="1340"/></g>
<rect x="1900" y="1374" width="30" height="28" fill="#454545"/>
<rect x="1902" y="1376" width="24" height="24" fill="#000"/>
<rect x="1928" y="1372" width="176" height="32" fill="#000"/>
<rect x="1926" y="1376" width="4" height="26" fill="#454545"/>
<rect x="1930" y="1404" width="174" height="2" fill="#444"/>
<rect x="1898" y="1372" width="2" height="2" fill="#000"/><rect x="1898" y="1402" width="2" height="2" fill="#000"/>
<g fill="#555"><rect x="1900" y="1374" width="2" height="2"/><rect x="1900" y="1400" width="2" height="2"/><rect x="1926" y="1374" width="2" height="2"/><rect x="1926" y="1400" width="2" height="2"/></g>
<g fill="#fff"><use href="#g116" x="1934" y="1374"/><use href="#g114" x="1950" y="1374"/><use href="#g105" x="1966" y="1374"/><use href="#g109" x="1982" y="1374"/></g>
<rect x="1900" y="1408" width="30" height="28" fill="#454545"/>
<rect x="1902" y="1410" width="24" height="24" fill="#000"/>
<rect x="1928" y="1406" width="176" height="32" fill="#000"/>
<rect x="1926" y="1410" width="4" height="26" fill="#454545"/>
<rect x="1898" y="1406" width="2" height="2" fill="#000"/><rect x="1898" y="1436" width="2" height="2" fill="#000"/>
<g fill="#555"><rect x="1900" y="1408" width="2" height="2"/><rect x="1900" y="1434" width="2" height="2"/><rect x="1926" y="1408" width="2" height="2"/><rect x="1926" y="1434" width="2" height="2"/></g>
<g fill="#fff"><use href="#g114" x="1934" y="1408"/><use href="#g101" x="1950" y="1408"/><use href="#g45" x="1966" y="1408"/><use href="#g108" x="1982" y="1408"/><use href="#g97" x="1998" y="1408"/><use href="#g98" x="2014" y="1408"/><use href="#g101" x="2030" y="1408"/><use href="#g108" x="2046" y="1408"/></g>
<g fill="none" stroke="#000" stroke-opacity="0.25" stroke-width="2"><use href="#g80" x="132" y="1582"/><use href="#g108" x="148" y="1582"/><use href="#g101" x="164" y="1582"/><use href="#g97" x="180" y="1582"/><use href="#g115" x="196" y="1582"/><use href="#g101" x="212" y="1582"/><use href="#g115" x="244" y="1582"/><use href="#g101" x="260" y="1582"/><use href="#g108" x="276" y="1582"/><use href="#g101" x="292" y="1582"/><use href="#g99" x="308" y="1582"/><use href="#g116" x="324" y="1582"/><use href="#g97" x="356" y="1582"/><use href="#g115" x="388" y="1582"/><use href="#g101" x="404" y="1582"/><use href="#g114" x="420" y="1582"/><use href="#g105" x="436" y="1582"/><use href="#g97" x="452" y="1582"/><use href="#g108" x="468" y="1582"/><use href="#g112" x="500" y="1582"/><use href="#g111" x="516" y="1582"/><use href="#g114" x="532" y="1582"/><use href="#g116" x="548" y="1582"/><use href="#g102" x="580" y="1582"/><use href="#g114" x="596" y="1582"/><use href="#g111" x="612" y="1582"/><use href="#g109" x="628" y="1582"/><use href="#g116" x="660" y="1582"/><use href="#g104" x="676" y="1582"/><use href="#g101" x="692" y="1582"/><use href="#g100" x="724" y="1582"/><use href="#g114" x="740" y="1582"/><use href="#g111" x="756" y="1582"/><use href="#g112" x="772" y="1582"/><use href="#g100" x="788" y="1582"/><use href="#g111" x="804" y="1582"/><use href="#g119" x="820" y="1582"/><use href="#g110" x="836" y="1582"/><use href="#g109" x="868" y="1582"/><use href="#g101" x="884" y="1582"/><use href="#g110" x="900" y="1582"/><use href="#g117" x="916" y="1582"/></g>
<g fill="#fff"><use href="#g80" x="132" y="1582"/><use href="#g108" x="148" y="1582"/><use href="#g101" x="164" y="1582"/><use href="#g97" x="180" y="1582"/><use href="#g115" x="196" y="1582"/><use href="#g101" x="212" y="1582"/><use href="#g115" x="244" y="1582"/><use href="#g101" x="260" y="1582"/><use href="#g108" x="276" y="1582"/><use href="#g101" x="292" y="1582"/><use href="#g99" x="308" y="1582"/><use href="#g116" x="324" y="1582"/><use href="#g97" x="356" y="1582"/><use href="#g115" x="388" y="1582"/><use href="#g101" x="404" y="1582"/><use href="#g114" x="420" y="1582"/><use href="#g105" x="436" y="1582"/><use href="#g97" x="452" y="1582"/><use href="#g108" x="468" y="1582"/><use href="#g112" x="500" y="1582"/><use href="#g111" x="516" y="1582"/><use href="#g114" x="532" y="1582"/><use href="#g116" x="548" y="1582"/><use href="#g102" x="580" y="1582"/><use href="#g114" x="596" y="1582"/><use href="#g111" x="612" y="1582"/><use href="#g109" x="628" y="1582"/><use href="#g116" x="660" y="1582"/><use href="#g104" x="676" y="1582"/><use href="#g101" x="692" y="1582"/><use href="#g100" x="724" y="1582"/><use href="#g114" x="740" y="1582"/><use href="#g111" x="756" y="1582"/><use href="#g112" x="772" y="1582"/><use href="#g100" x="788" y="1582"/><use href="#g111" x="804" y="1582"/><use href="#g119" x="820" y="1582"/><use href="#g110" x="836" y="1582"/><use href="#g109" x="868" y="1582"/><use href="#g101" x="884" y="1582"/><use href="#g110" x="900" y="1582"/><use href="#g117" x="916" y="1582"/></g>
</svg></body></html>
